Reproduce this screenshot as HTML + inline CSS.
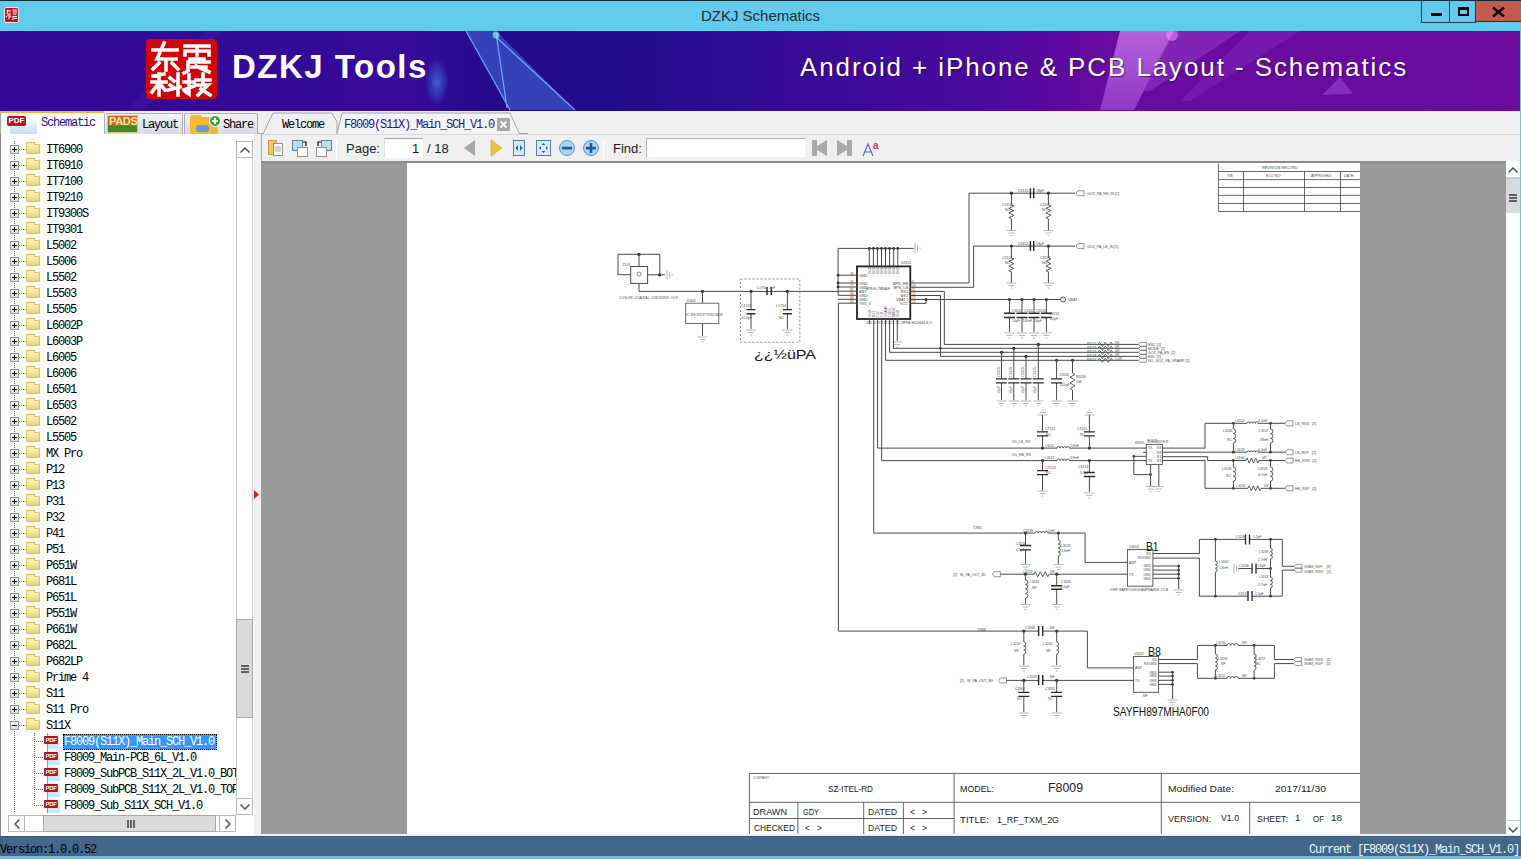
<!DOCTYPE html>
<html><head><meta charset="utf-8"><style>
*{margin:0;padding:0;box-sizing:border-box}
html,body{width:1521px;height:859px;overflow:hidden;background:#f0f0f0;font-family:"Liberation Sans",sans-serif;position:relative}
.a{position:absolute}
#title{left:0;top:0;width:1521px;height:31px;background:#62caec;border-top:1px solid #0c2c3c}
#title .t{left:0;width:1521px;top:6px;text-align:center;font-size:15px;color:#1e2c38}
.wb{top:0;height:22px;border:1px solid #1a3c50;border-top:none}
#banner{left:0;top:31px;width:1520px;height:80px;background:#300a94;overflow:hidden}
#tabs{left:0;top:111px;width:1520px;height:23px;background:#f0f0f0}
#left{left:0;top:134px;width:254px;height:703px;background:#fff;border-left:1px solid #888;overflow:hidden}
#split{left:254px;top:134px;width:8px;height:702px;background:#f0f0f0}
#tb{left:261px;top:134px;width:1259px;height:27px;background:#f0f0f0;border-top:1px solid #d8d8d8;border-left:1px solid #a8a8a8}
#view{left:261px;top:161px;width:1245px;height:673px;background:#9a9a9a}
#page{left:407px;top:163px;width:953px;height:671px;background:#fff;overflow:hidden}
#vsb{left:1506px;top:161px;width:14px;height:673px;background:#fff}
#status{left:0;top:836px;width:1521px;height:20px;background:#44668a;border-top:1px solid #3c5a70;border-bottom:1px solid #386888}
#bottom{left:0;top:856px;width:1521px;height:3px;background:#6ec2de}
#rb{left:1520px;top:31px;width:1px;height:825px;background:#64c8ea}
.mono{font-family:"Liberation Mono",monospace}
.tt{font-family:"Liberation Mono",monospace;font-size:12px;line-height:16px;letter-spacing:-1.2px;color:#000;white-space:nowrap}
.vdot{width:1px;background:repeating-linear-gradient(180deg,#707070 0 1px,transparent 1px 2px)}
.hdot{height:1px;background:repeating-linear-gradient(90deg,#707070 0 1px,transparent 1px 2px)}
.pbox{width:9px;height:9px;border:1px solid #9a9a9a;background:linear-gradient(180deg,#fff,#dcdcdc)}
.ph{left:1px;top:3px;width:5px;height:1px;background:#000}
.pv{left:3px;top:1px;width:1px;height:5px;background:#000}
.fd{width:14px;height:10px;background:linear-gradient(180deg,#fcf2b8,#ecd070);border:1px solid #dcc060;border-radius:1px}
.fd:before{content:"";position:absolute;left:-1px;top:-3px;width:7px;height:2px;background:#f8eaa8;border:1px solid #dcc060;border-bottom:none}
.pdoc{width:13px;height:16px;background:linear-gradient(180deg,#f0f8ff,#c8e4f4);border-left:1px solid #7aa0c0}
.pbad{width:14px;height:8px;background:#b8121a;color:#fff;font-size:6px;line-height:8px;font-weight:bold;text-align:center;border-radius:1px;letter-spacing:-0.3px}
.sel{background:#3399ff;outline:1px dotted #000;outline-offset:-1px}
.tab{top:113px;height:21px;border:1px solid #a8b0bc;border-bottom:none;background:linear-gradient(180deg,#f4f4f8,#d8dae6);border-radius:2px 2px 0 0}
.tl{font-family:"Liberation Mono",monospace;font-size:12px;letter-spacing:-1.2px;white-space:nowrap}
.ti{font-size:13px;color:#1c1c1c}
.sep{top:139px;width:1px;height:20px;background:#c8c8c8;border-right:1px solid #fff}
</style></head><body>
<div id="title" class="a"><div class="a t">DZKJ Schematics</div>
<div class="a" style="left:4px;top:6px;width:15px;height:16px;background:#c8141c;border-radius:2px;border:1px solid #e8e8e8"></div><svg class="a" style="left:5px;top:7px" width="13" height="14" stroke="#fff" stroke-width="1" fill="none"><path d="M1.5 3 H6 M3 1.5 L2 6 H6 M4 6 V11 M1 9 L2.5 7.5 M6 9 L5 7.5 M7.5 2 H12 M7.5 4 H12 M8 6 H11.5 M8 8 V12 M8 8.5 H12 M9 10.5 H12"/></svg>
<div class="a wb" style="left:1421px;width:29px"><div class="a" style="left:9px;top:12px;width:11px;height:3px;background:#000"></div></div>
<div class="a wb" style="left:1449px;width:27px;border-left:1px solid #1a3c50"><div class="a" style="left:8px;top:6px;width:11px;height:9px;border:2px solid #000;border-top-width:3px"></div></div>
<div class="a" style="left:1476px;top:0;width:45px;height:21px;background:#c75a4e;border-bottom:1px solid #40202a"><svg class="a" style="left:16px;top:6px" width="13" height="10"><path d="M1 0.5 L12 9.5 M12 0.5 L1 9.5" stroke="#000" stroke-width="2.6"/></svg></div>
</div>
<div id="banner" class="a">
<svg class="a" style="left:0;top:0" width="1520" height="80">
<defs>
<linearGradient id="bg" x1="0" y1="0" x2="1520" y2="0" gradientUnits="userSpaceOnUse">
<stop offset="0" stop-color="#300a94"/><stop offset="0.27" stop-color="#360a9a"/><stop offset="0.33" stop-color="#220a8a"/><stop offset="0.40" stop-color="#220c8a"/><stop offset="0.46" stop-color="#2c0c92"/><stop offset="0.54" stop-color="#380a98"/><stop offset="0.59" stop-color="#420a9c"/><stop offset="0.66" stop-color="#4e0aa0"/><stop offset="0.69" stop-color="#5a0aa0"/><stop offset="0.73" stop-color="#680aa0"/><stop offset="1" stop-color="#6a0a9e"/>
</linearGradient>
<radialGradient id="glow" cx="0.5" cy="0.5" r="0.5"><stop offset="0" stop-color="#40a0ff" stop-opacity="0.7"/><stop offset="1" stop-color="#40a0ff" stop-opacity="0"/></radialGradient>
<linearGradient id="pk" x1="0" y1="0" x2="0" y2="1"><stop offset="0" stop-color="#d080f0" stop-opacity="0.75"/><stop offset="1" stop-color="#b060e0" stop-opacity="0.55"/></linearGradient>
</defs>
<rect width="1520" height="80" fill="url(#bg)"/>
<polygon points="125,80 205,0 222,0 142,80" fill="#5a50d0" opacity="0.12"/>
<polygon points="466,0 496,0 575,79 510,79" fill="#3c58cc" opacity="0.7"/>
<path d="M466,0 L510,79 M496,2 L507,77 M496,6 L575,79" stroke="#70b0ff" stroke-width="1.3" fill="none" opacity="0.9"/>
<circle cx="496" cy="4" r="3.5" fill="#a0ffff" opacity="0.6"/>
<ellipse cx="437" cy="51" rx="12" ry="24" fill="url(#glow)" opacity="0.8"/>
<polygon points="1120,0 1174,0 1134,79 1100,79" fill="url(#pk)"/>
<polygon points="1174,0 1240,0 1150,60 1140,60" fill="#9a40d0" opacity="0.5"/>
<polygon points="1250,0 1300,0 1190,70 1180,70" fill="#9040d0" opacity="0.3"/>
<circle cx="1172" cy="4" r="6" fill="#ff90ff" opacity="0.5"/>
<polygon points="1322,64 1340,46 1353,63" fill="#a050e0" opacity="0.5"/>
</svg>
<div class="a" style="left:146px;top:8px;width:71px;height:60px;background:#d0060a;border-radius:4px"></div>
<svg class="a" style="left:146px;top:8px" width="71" height="60" fill="none" stroke="#fff" stroke-width="3.6" stroke-linecap="square">
<path d="M7 11 H31 M18 4 L11 20 H30 M20 20 V31 M13 24 L7 30 M26 24 L32 30"/>
<path d="M39 7 H63 M39 12 V16 M63 12 V16 M39 12 H63 M51 7 V16 M44 20 H58 M42 23 V32 L38 34 M42 23 H63 M46 28 H60 M50 27 L63 33"/>
<path d="M7 37 L18 35 M13 35 V56 M6 43 H20 M12 45 L6 53 M14 45 L19 51 M24 39 L28 42 M24 46 L28 49 M32 35 V56 M22 51 L34 48"/>
<path d="M38 43 H48 M43 36 V55 L40 53 M38 51 L48 47 M50 41 H64 M57 35 V46 M51 46 H62 L52 56 M55 50 L64 56"/>
</svg>
<div class="a" style="left:232px;top:17px;font-size:33px;font-weight:bold;color:#fff;letter-spacing:1.5px;white-space:nowrap">DZKJ Tools</div>
<div class="a" style="left:800px;top:21px;font-size:26px;color:#fff;letter-spacing:1.9px;white-space:nowrap;text-shadow:1px 1px 1px rgba(40,0,60,0.6)">Android + iPhone &amp; PCB Layout - Schematics</div>
</div>
<div id="rb" class="a"></div>
<div id="tabs" class="a">
<div class="a" style="left:0;top:0px;width:104px;height:23px;background:#fff;border-top:2px solid #f4b030;border-left:1px solid #9aa"></div>
<div class="a" style="left:10px;top:6px;width:27px;height:17px;background:linear-gradient(180deg,#f8fcff,#c8e0f0);clip-path:polygon(0 0,70% 0,100% 30%,100% 100%,0 100%)"></div>
<div class="a" style="left:7px;top:5px;width:19px;height:10px;background:#c01018;border-radius:2px;color:#fff;font-size:8px;font-weight:bold;line-height:10px;text-align:center">PDF</div>
<div class="a tl" style="left:41px;top:5px;color:#1818a0">Schematic</div>
<div class="a tab" style="left:104px;top:2px;width:79px"></div>
<div class="a" style="left:107px;top:4px;width:31px;height:18px;background:linear-gradient(180deg,#c8641c 0 60%,#3c8a30 60%);border:1px solid #e8c070"></div>
<div class="a" style="left:109px;top:4px;font-size:11px;font-weight:bold;color:#ffe8a0;letter-spacing:-0.3px">PADS</div>
<div class="a tl" style="left:142px;top:7px;color:#000">Layout</div>
<div class="a tab" style="left:184px;top:2px;width:74px"></div>
<div class="a" style="left:190px;top:6px;width:28px;height:17px;background:#f8b830;border-radius:2px"></div>
<div class="a" style="left:190px;top:4px;width:12px;height:4px;background:#f8b830;border-radius:2px 2px 0 0"></div>
<div class="a" style="left:196px;top:14px;width:13px;height:7px;background:#5aa0e0;border-radius:5px"></div>
<div class="a" style="left:209px;top:4px;width:12px;height:12px;background:#3aa83a;border-radius:50%;border:1px solid #fff"></div>
<div class="a" style="left:214px;top:7px;width:2px;height:6px;background:#fff"></div>
<div class="a" style="left:212px;top:9px;width:6px;height:2px;background:#fff"></div>
<div class="a tl" style="left:223px;top:7px;color:#000">Share</div>
<svg class="a" style="left:258px;top:0" width="270" height="23"><path d="M5 23 L15 2 H74 L79 11 L79 23" fill="#f0f0f2" stroke="#a0a6b0"/><path d="M79 23 L84 2 H252 L261 22" fill="#f4f4f6" stroke="#a0a6b0"/><path d="M0 22.5 H5 M261 22.5 H1270" stroke="#a0a6b0"/></svg>
<div class="a tl" style="left:282px;top:7px;color:#000">Welcome</div>
<div class="a tl" style="left:344px;top:7px;color:#1818a0">F8009(S11X)_Main_SCH_V1.0</div>
<div class="a" style="left:497px;top:7px;width:13px;height:13px;background:#a8a8a8"><svg class="a" style="left:3px;top:3px" width="7" height="7"><path d="M0.5 0.5 L6.5 6.5 M6.5 0.5 L0.5 6.5" stroke="#fff" stroke-width="1.8"/></svg></div>
</div>
<div id="left" class="a">
<div class="a" style="left:-1px;top:-134px;width:262px;height:860px">
<div class="a vdot" style="left:14px;top:141px;height:672px"></div>
<div class="a hdot" style="left:19px;top:149px;width:7px"></div>
<div class="a pbox" style="left:10px;top:145px"><div class="a ph"></div><div class="a pv"></div></div>
<div class="a fd" style="left:26px;top:144px"></div>
<div class="a tt" style="left:46px;top:142px">IT6900</div>
<div class="a hdot" style="left:19px;top:165px;width:7px"></div>
<div class="a pbox" style="left:10px;top:161px"><div class="a ph"></div><div class="a pv"></div></div>
<div class="a fd" style="left:26px;top:160px"></div>
<div class="a tt" style="left:46px;top:158px">IT6910</div>
<div class="a hdot" style="left:19px;top:181px;width:7px"></div>
<div class="a pbox" style="left:10px;top:177px"><div class="a ph"></div><div class="a pv"></div></div>
<div class="a fd" style="left:26px;top:176px"></div>
<div class="a tt" style="left:46px;top:174px">IT7100</div>
<div class="a hdot" style="left:19px;top:197px;width:7px"></div>
<div class="a pbox" style="left:10px;top:193px"><div class="a ph"></div><div class="a pv"></div></div>
<div class="a fd" style="left:26px;top:192px"></div>
<div class="a tt" style="left:46px;top:190px">IT9210</div>
<div class="a hdot" style="left:19px;top:213px;width:7px"></div>
<div class="a pbox" style="left:10px;top:209px"><div class="a ph"></div><div class="a pv"></div></div>
<div class="a fd" style="left:26px;top:208px"></div>
<div class="a tt" style="left:46px;top:206px">IT9300S</div>
<div class="a hdot" style="left:19px;top:229px;width:7px"></div>
<div class="a pbox" style="left:10px;top:225px"><div class="a ph"></div><div class="a pv"></div></div>
<div class="a fd" style="left:26px;top:224px"></div>
<div class="a tt" style="left:46px;top:222px">IT9301</div>
<div class="a hdot" style="left:19px;top:245px;width:7px"></div>
<div class="a pbox" style="left:10px;top:241px"><div class="a ph"></div><div class="a pv"></div></div>
<div class="a fd" style="left:26px;top:240px"></div>
<div class="a tt" style="left:46px;top:238px">L5002</div>
<div class="a hdot" style="left:19px;top:261px;width:7px"></div>
<div class="a pbox" style="left:10px;top:257px"><div class="a ph"></div><div class="a pv"></div></div>
<div class="a fd" style="left:26px;top:256px"></div>
<div class="a tt" style="left:46px;top:254px">L5006</div>
<div class="a hdot" style="left:19px;top:277px;width:7px"></div>
<div class="a pbox" style="left:10px;top:273px"><div class="a ph"></div><div class="a pv"></div></div>
<div class="a fd" style="left:26px;top:272px"></div>
<div class="a tt" style="left:46px;top:270px">L5502</div>
<div class="a hdot" style="left:19px;top:293px;width:7px"></div>
<div class="a pbox" style="left:10px;top:289px"><div class="a ph"></div><div class="a pv"></div></div>
<div class="a fd" style="left:26px;top:288px"></div>
<div class="a tt" style="left:46px;top:286px">L5503</div>
<div class="a hdot" style="left:19px;top:309px;width:7px"></div>
<div class="a pbox" style="left:10px;top:305px"><div class="a ph"></div><div class="a pv"></div></div>
<div class="a fd" style="left:26px;top:304px"></div>
<div class="a tt" style="left:46px;top:302px">L5505</div>
<div class="a hdot" style="left:19px;top:325px;width:7px"></div>
<div class="a pbox" style="left:10px;top:321px"><div class="a ph"></div><div class="a pv"></div></div>
<div class="a fd" style="left:26px;top:320px"></div>
<div class="a tt" style="left:46px;top:318px">L6002P</div>
<div class="a hdot" style="left:19px;top:341px;width:7px"></div>
<div class="a pbox" style="left:10px;top:337px"><div class="a ph"></div><div class="a pv"></div></div>
<div class="a fd" style="left:26px;top:336px"></div>
<div class="a tt" style="left:46px;top:334px">L6003P</div>
<div class="a hdot" style="left:19px;top:357px;width:7px"></div>
<div class="a pbox" style="left:10px;top:353px"><div class="a ph"></div><div class="a pv"></div></div>
<div class="a fd" style="left:26px;top:352px"></div>
<div class="a tt" style="left:46px;top:350px">L6005</div>
<div class="a hdot" style="left:19px;top:373px;width:7px"></div>
<div class="a pbox" style="left:10px;top:369px"><div class="a ph"></div><div class="a pv"></div></div>
<div class="a fd" style="left:26px;top:368px"></div>
<div class="a tt" style="left:46px;top:366px">L6006</div>
<div class="a hdot" style="left:19px;top:389px;width:7px"></div>
<div class="a pbox" style="left:10px;top:385px"><div class="a ph"></div><div class="a pv"></div></div>
<div class="a fd" style="left:26px;top:384px"></div>
<div class="a tt" style="left:46px;top:382px">L6501</div>
<div class="a hdot" style="left:19px;top:405px;width:7px"></div>
<div class="a pbox" style="left:10px;top:401px"><div class="a ph"></div><div class="a pv"></div></div>
<div class="a fd" style="left:26px;top:400px"></div>
<div class="a tt" style="left:46px;top:398px">L6503</div>
<div class="a hdot" style="left:19px;top:421px;width:7px"></div>
<div class="a pbox" style="left:10px;top:417px"><div class="a ph"></div><div class="a pv"></div></div>
<div class="a fd" style="left:26px;top:416px"></div>
<div class="a tt" style="left:46px;top:414px">L6502</div>
<div class="a hdot" style="left:19px;top:437px;width:7px"></div>
<div class="a pbox" style="left:10px;top:433px"><div class="a ph"></div><div class="a pv"></div></div>
<div class="a fd" style="left:26px;top:432px"></div>
<div class="a tt" style="left:46px;top:430px">L5505</div>
<div class="a hdot" style="left:19px;top:453px;width:7px"></div>
<div class="a pbox" style="left:10px;top:449px"><div class="a ph"></div><div class="a pv"></div></div>
<div class="a fd" style="left:26px;top:448px"></div>
<div class="a tt" style="left:46px;top:446px">MX Pro</div>
<div class="a hdot" style="left:19px;top:469px;width:7px"></div>
<div class="a pbox" style="left:10px;top:465px"><div class="a ph"></div><div class="a pv"></div></div>
<div class="a fd" style="left:26px;top:464px"></div>
<div class="a tt" style="left:46px;top:462px">P12</div>
<div class="a hdot" style="left:19px;top:485px;width:7px"></div>
<div class="a pbox" style="left:10px;top:481px"><div class="a ph"></div><div class="a pv"></div></div>
<div class="a fd" style="left:26px;top:480px"></div>
<div class="a tt" style="left:46px;top:478px">P13</div>
<div class="a hdot" style="left:19px;top:501px;width:7px"></div>
<div class="a pbox" style="left:10px;top:497px"><div class="a ph"></div><div class="a pv"></div></div>
<div class="a fd" style="left:26px;top:496px"></div>
<div class="a tt" style="left:46px;top:494px">P31</div>
<div class="a hdot" style="left:19px;top:517px;width:7px"></div>
<div class="a pbox" style="left:10px;top:513px"><div class="a ph"></div><div class="a pv"></div></div>
<div class="a fd" style="left:26px;top:512px"></div>
<div class="a tt" style="left:46px;top:510px">P32</div>
<div class="a hdot" style="left:19px;top:533px;width:7px"></div>
<div class="a pbox" style="left:10px;top:529px"><div class="a ph"></div><div class="a pv"></div></div>
<div class="a fd" style="left:26px;top:528px"></div>
<div class="a tt" style="left:46px;top:526px">P41</div>
<div class="a hdot" style="left:19px;top:549px;width:7px"></div>
<div class="a pbox" style="left:10px;top:545px"><div class="a ph"></div><div class="a pv"></div></div>
<div class="a fd" style="left:26px;top:544px"></div>
<div class="a tt" style="left:46px;top:542px">P51</div>
<div class="a hdot" style="left:19px;top:565px;width:7px"></div>
<div class="a pbox" style="left:10px;top:561px"><div class="a ph"></div><div class="a pv"></div></div>
<div class="a fd" style="left:26px;top:560px"></div>
<div class="a tt" style="left:46px;top:558px">P651W</div>
<div class="a hdot" style="left:19px;top:581px;width:7px"></div>
<div class="a pbox" style="left:10px;top:577px"><div class="a ph"></div><div class="a pv"></div></div>
<div class="a fd" style="left:26px;top:576px"></div>
<div class="a tt" style="left:46px;top:574px">P681L</div>
<div class="a hdot" style="left:19px;top:597px;width:7px"></div>
<div class="a pbox" style="left:10px;top:593px"><div class="a ph"></div><div class="a pv"></div></div>
<div class="a fd" style="left:26px;top:592px"></div>
<div class="a tt" style="left:46px;top:590px">P651L</div>
<div class="a hdot" style="left:19px;top:613px;width:7px"></div>
<div class="a pbox" style="left:10px;top:609px"><div class="a ph"></div><div class="a pv"></div></div>
<div class="a fd" style="left:26px;top:608px"></div>
<div class="a tt" style="left:46px;top:606px">P551W</div>
<div class="a hdot" style="left:19px;top:629px;width:7px"></div>
<div class="a pbox" style="left:10px;top:625px"><div class="a ph"></div><div class="a pv"></div></div>
<div class="a fd" style="left:26px;top:624px"></div>
<div class="a tt" style="left:46px;top:622px">P661W</div>
<div class="a hdot" style="left:19px;top:645px;width:7px"></div>
<div class="a pbox" style="left:10px;top:641px"><div class="a ph"></div><div class="a pv"></div></div>
<div class="a fd" style="left:26px;top:640px"></div>
<div class="a tt" style="left:46px;top:638px">P682L</div>
<div class="a hdot" style="left:19px;top:661px;width:7px"></div>
<div class="a pbox" style="left:10px;top:657px"><div class="a ph"></div><div class="a pv"></div></div>
<div class="a fd" style="left:26px;top:656px"></div>
<div class="a tt" style="left:46px;top:654px">P682LP</div>
<div class="a hdot" style="left:19px;top:677px;width:7px"></div>
<div class="a pbox" style="left:10px;top:673px"><div class="a ph"></div><div class="a pv"></div></div>
<div class="a fd" style="left:26px;top:672px"></div>
<div class="a tt" style="left:46px;top:670px">Prime 4</div>
<div class="a hdot" style="left:19px;top:693px;width:7px"></div>
<div class="a pbox" style="left:10px;top:689px"><div class="a ph"></div><div class="a pv"></div></div>
<div class="a fd" style="left:26px;top:688px"></div>
<div class="a tt" style="left:46px;top:686px">S11</div>
<div class="a hdot" style="left:19px;top:709px;width:7px"></div>
<div class="a pbox" style="left:10px;top:705px"><div class="a ph"></div><div class="a pv"></div></div>
<div class="a fd" style="left:26px;top:704px"></div>
<div class="a tt" style="left:46px;top:702px">S11 Pro</div>
<div class="a hdot" style="left:19px;top:725px;width:7px"></div>
<div class="a pbox" style="left:10px;top:721px"><div class="a ph"></div></div>
<div class="a fd" style="left:26px;top:720px"></div>
<div class="a tt" style="left:46px;top:718px">S11X</div>
<div class="a vdot" style="left:34px;top:733px;height:73px"></div>
<div class="a hdot" style="left:34px;top:741px;width:10px"></div>
<div class="a pdoc" style="left:47px;top:733px"></div><div class="a pbad" style="left:44px;top:736px">PDF</div>
<div class="a sel" style="left:63px;top:734px;width:154px;height:16px"></div>
<div class="a tt" style="left:64px;top:734px;color:#fff">F8009(S11X)_Main_SCH_V1.0</div>
<div class="a hdot" style="left:34px;top:757px;width:10px"></div>
<div class="a pdoc" style="left:47px;top:749px"></div><div class="a pbad" style="left:44px;top:752px">PDF</div>
<div class="a tt" style="left:64px;top:750px">F8009_Main-PCB_6L_V1.0</div>
<div class="a hdot" style="left:34px;top:773px;width:10px"></div>
<div class="a pdoc" style="left:47px;top:765px"></div><div class="a pbad" style="left:44px;top:768px">PDF</div>
<div class="a tt" style="left:64px;top:766px">F8009_SubPCB_S11X_2L_V1.0_BOT</div>
<div class="a hdot" style="left:34px;top:789px;width:10px"></div>
<div class="a pdoc" style="left:47px;top:781px"></div><div class="a pbad" style="left:44px;top:784px">PDF</div>
<div class="a tt" style="left:64px;top:782px">F8009_SubPCB_S11X_2L_V1.0_TOP</div>
<div class="a hdot" style="left:34px;top:805px;width:10px"></div>
<div class="a pdoc" style="left:47px;top:797px"></div><div class="a pbad" style="left:44px;top:800px">PDF</div>
<div class="a tt" style="left:64px;top:798px">F8009_Sub_S11X_SCH_V1.0</div>
<div class="a" style="left:236px;top:141px;width:17px;height:673px;background:#fff;border:1px solid #c8c8c8"></div>
<div class="a" style="left:236px;top:141px;width:17px;height:17px;border:1px solid #b8b8b8;background:#fff"><svg class="a" style="left:3px;top:5px" width="10" height="6"><path d="M0.5 5.5 L5 1 L9.5 5.5" fill="none" stroke="#505050" stroke-width="1.5"/></svg></div>
<div class="a" style="left:236px;top:619px;width:17px;height:99px;border:1px solid #a8a8a8;background:#dadada"><div class="a" style="left:4px;top:45px;width:8px;height:2px;background:#606060"></div><div class="a" style="left:4px;top:48px;width:8px;height:2px;background:#606060"></div><div class="a" style="left:4px;top:51px;width:8px;height:2px;background:#606060"></div></div>
<div class="a" style="left:236px;top:798px;width:17px;height:17px;border:1px solid #b8b8b8;background:#fff"><svg class="a" style="left:3px;top:5px" width="10" height="6"><path d="M0.5 0.5 L5 5 L9.5 0.5" fill="none" stroke="#505050" stroke-width="1.5"/></svg></div>
<div class="a" style="left:8px;top:815px;width:228px;height:17px;background:#fff;border:1px solid #b8b8b8"></div>
<div class="a" style="left:8px;top:815px;width:17px;height:17px;border:1px solid #b8b8b8;background:#fff"><svg class="a" style="left:5px;top:3px" width="6" height="10"><path d="M5.5 0.5 L1 5 L5.5 9.5" fill="none" stroke="#505050" stroke-width="1.5"/></svg></div>
<div class="a" style="left:43px;top:815px;width:173px;height:17px;border:1px solid #a8a8a8;background:#dadada"><div class="a" style="left:83px;top:4px;width:2px;height:8px;background:#606060"></div><div class="a" style="left:86px;top:4px;width:2px;height:8px;background:#606060"></div><div class="a" style="left:89px;top:4px;width:2px;height:8px;background:#606060"></div></div>
<div class="a" style="left:219px;top:815px;width:17px;height:17px;border:1px solid #b8b8b8;background:#fff"><svg class="a" style="left:5px;top:3px" width="6" height="10"><path d="M0.5 0.5 L5 5 L0.5 9.5" fill="none" stroke="#505050" stroke-width="1.5"/></svg></div>
</div></div>
<div id="split" class="a"><svg class="a" style="left:0;top:356px" width="5" height="9"><path d="M0 0 L5 4.5 L0 9Z" fill="#d02020"/></svg></div>
<div id="tb" class="a"></div>
<svg class="a" style="left:262px;top:134px" width="650" height="27">
<g transform="translate(6,6)">
<rect x="0.5" y="0.5" width="8" height="14" fill="#f0c860" stroke="#c8a040"/>
<rect x="5.5" y="3.5" width="9" height="12" fill="#fff" stroke="#909090"/>
<path d="M7 7 H13 M7 9 H13 M7 11 H13" stroke="#a0a0a0"/>
</g>
<g transform="translate(30,6)">
<rect x="0.5" y="0.5" width="10" height="10" fill="#c0dcf0" stroke="#6080a0"/>
<rect x="5.5" y="7.5" width="10" height="9" fill="#fff" stroke="#909090"/>
<path d="M11 2 H14 V6" fill="none" stroke="#000" stroke-width="1.2"/>
</g>
<g transform="translate(54,6)">
<rect x="5.5" y="0.5" width="10" height="10" fill="#c0dcf0" stroke="#6080a0"/>
<rect x="0.5" y="7.5" width="10" height="9" fill="#fff" stroke="#909090"/>
<path d="M5 2 H2 V6" fill="none" stroke="#000" stroke-width="1.2"/>
</g>
<path d="M202 6 L213 1 V16Z" transform="translate(0,5) scale(1,1)" fill="none"/>
<path d="M213 6 V22 L202 14Z" fill="#a8a8a8"/>
<path d="M229 6 V22 L240 14Z" fill="#e8c040" stroke="#c8a020" stroke-width="0.6"/>
<rect x="251.5" y="6.5" width="11" height="15" fill="#d8e8f8" stroke="#5080b0"/>
<path d="M256 11 L253.5 14 L256 17Z M258 11 L260.5 14 L258 17Z" fill="#2060a0"/>
<rect x="274.5" y="6.5" width="14" height="15" fill="#d8e8f8" stroke="#5080b0"/>
<path d="M281.5 9 L279.5 11 H283.5Z M281.5 19 L279.5 17 H283.5Z M277 14 L279 12 V16Z M286 14 L284 12 V16Z" fill="#2060a0"/>
<circle cx="305" cy="14" r="7.5" fill="#a8d4f4" stroke="#7090a8"/>
<rect x="300" y="12.8" width="10" height="2.6" fill="#1a5aa0"/>
<circle cx="329" cy="14" r="7.5" fill="#a8d4f4" stroke="#7090a8"/>
<rect x="324" y="12.8" width="10" height="2.6" fill="#1a5aa0"/><rect x="327.7" y="9" width="2.6" height="10" fill="#1a5aa0"/>
<path d="M550 6 H555 V12 L565 6 V22 L555 16 V22 H550Z" fill="#a8a8a8"/>
<path d="M590 6 H585 V12 L575 6 V22 L585 16 V22 H590Z" fill="#a8a8a8"/>
<path d="M601 22 L606 10 L611 22 M603 18 H609" fill="none" stroke="#6060d8" stroke-width="1.2"/>
<text x="611" y="15" font-size="10" font-family="Liberation Sans" fill="#d03080" font-weight="bold">a</text>
</svg>
<div class="a sep" style="left:336px"></div>
<div class="a sep" style="left:603px"></div>
<div class="a ti" style="left:346px;top:141px">Page:</div>
<div class="a" style="left:384px;top:138px;width:39px;height:20px;background:#fff;border-top:1px solid #a0a0a0;border-left:1px solid #e0e0e0"></div>
<div class="a ti" style="left:412px;top:141px">1</div>
<div class="a ti" style="left:427px;top:141px">/ 18</div>
<div class="a ti" style="left:613px;top:141px">Find:</div>
<div class="a" style="left:646px;top:138px;width:160px;height:20px;background:#fff;border:1px solid #b0b0b0;border-right-color:#f0f0f0;border-bottom-color:#f0f0f0"></div>

<div id="view" class="a"></div>
<div class="a" style="left:261px;top:161px;width:1245px;height:2px;background:#8c8c8c"></div>
<div id="page" class="a"><svg class="a" style="left:0;top:0" width="953" height="671"><g transform="translate(-407,-163)"><path d="M618,274.7 L618,254.3 L659.8,254.3 L659.8,274.8" stroke="#4a4a4a" stroke-width="1" fill="none"/>
<path d="M618,274.7 L630.7,274.7" stroke="#4a4a4a" stroke-width="1" fill="none"/>
<rect x="630.7" y="266.5" width="16.899999999999977" height="16.899999999999977" stroke="#4a4a4a" stroke-width="1" fill="none"/>
<path d="M639,254.3 L639,266.5" stroke="#4a4a4a" stroke-width="1" fill="none"/>
<circle cx="639" cy="254.3" r="1.6" fill="#333"/>
<path d="M647.6,274.8 L665,274.8" stroke="#4a4a4a" stroke-width="1" fill="none"/>
<circle cx="659.6" cy="274.8" r="1.6" fill="#333"/>
<path d="M667,269.8 V279.8 M669.5,271.8 V277.8 M672,273.8 V275.8" stroke="#999" stroke-width="0.7" fill="none"/>
<circle cx="639" cy="274" r="2" stroke="#555" stroke-width="0.7" fill="none"/>
<text x="622" y="266" font-size="4" fill="#4a4a4a" text-anchor="start" font-weight="normal" font-family="Liberation Sans" xml:space="preserve">J101</text>
<text x="619" y="299" font-size="3.6" fill="#4a4a4a" text-anchor="start" font-weight="normal" font-family="Liberation Sans" xml:space="preserve">CON-RF-COAXIAL-103235829 #O.K</text>
<path d="M639,283.4 L639,291.4 L838.4,291.4" stroke="#4a4a4a" stroke-width="1" fill="none"/>
<circle cx="702.5" cy="291.4" r="1.6" fill="#333"/>
<rect x="685.7" y="303.2" width="33.09999999999991" height="20.400000000000034" stroke="#4a4a4a" stroke-width="0.8" fill="none"/>
<text x="686" y="315.5" font-size="3.6" fill="#4a4a4a" text-anchor="start" font-weight="normal" font-family="Liberation Sans" xml:space="preserve">IC-RF-RX3TTP4CW08</text>
<text x="686" y="301.5" font-size="3.6" fill="#4a4a4a" text-anchor="start" font-weight="normal" font-family="Liberation Sans" xml:space="preserve">J1302</text>
<path d="M702.5,291.4 L702.5,303.2" stroke="#4a4a4a" stroke-width="1" fill="none"/>
<path d="M702.5,323.6 L702.5,336" stroke="#4a4a4a" stroke-width="1" fill="none"/>
<path d="M697.5,337 H707.5 M699.5,339.5 H705.5 M701.5,342 H703.5" stroke="#999" stroke-width="0.7" fill="none"/>
<rect x="740.5" y="279" width="59.299999999999955" height="63.19999999999999" stroke="#888" stroke-width="0.9" fill="none" stroke-dasharray="2,2"/>
<circle cx="751" cy="291.4" r="1.6" fill="#333"/>
<circle cx="787.4" cy="291.4" r="1.6" fill="#333"/>
<path d="M767,287 V295 M771.3,287 V295" stroke="#222" stroke-width="1.4"/>
<path d="M751,291.4 L751,309.6" stroke="#4a4a4a" stroke-width="1" fill="none"/>
<path d="M751,313.7 L751,329" stroke="#4a4a4a" stroke-width="1" fill="none"/>
<path d="M746.5,309.6 H755.5 M746.5,313.7 H755.5" stroke="#2a2a2a" stroke-width="1.35"/>
<path d="M746,330 H756 M748,332.5 H754 M750,335 H752" stroke="#999" stroke-width="0.7" fill="none"/>
<path d="M787.4,291.4 L787.4,309.6" stroke="#4a4a4a" stroke-width="1" fill="none"/>
<path d="M787.4,313.7 L787.4,329" stroke="#4a4a4a" stroke-width="1" fill="none"/>
<path d="M782.9,309.6 H791.9 M782.9,313.7 H791.9" stroke="#2a2a2a" stroke-width="1.35"/>
<path d="M782.4,330 H792.4 M784.4,332.5 H790.4 M786.4,335 H788.4" stroke="#999" stroke-width="0.7" fill="none"/>
<text x="741" y="307" font-size="3.6" fill="#4a4a4a" text-anchor="start" font-weight="normal" font-family="Liberation Sans" xml:space="preserve">C1703</text>
<text x="741" y="319" font-size="3.6" fill="#4a4a4a" text-anchor="start" font-weight="normal" font-family="Liberation Sans" xml:space="preserve">10.5pF</text>
<text x="776" y="307" font-size="3.6" fill="#4a4a4a" text-anchor="start" font-weight="normal" font-family="Liberation Sans" xml:space="preserve">L1704</text>
<text x="779" y="319" font-size="3.6" fill="#4a4a4a" text-anchor="start" font-weight="normal" font-family="Liberation Sans" xml:space="preserve">NC</text>
<text x="757" y="289" font-size="3.6" fill="#4a4a4a" text-anchor="start" font-weight="normal" font-family="Liberation Sans" xml:space="preserve">L1700  1pF</text>
<text x="754" y="358.5" font-size="13" fill="#111" text-anchor="start" font-weight="normal" font-family="Liberation Sans" xml:space="preserve" textLength="62" lengthAdjust="spacingAndGlyphs">¿¿½üPA</text>
<rect x="857" y="266.4" width="53.3" height="52.6" stroke="#222" stroke-width="1.8" fill="none"/>
<path d="M838.1,295.3 L838.1,248.4 L913.8,248.4" stroke="#4a4a4a" stroke-width="1" fill="none"/>
<path d="M915,243.4 V253.4 M917.5,245.4 V251.4 M920,247.4 V249.4" stroke="#999" stroke-width="0.7" fill="none"/>
<path d="M869.3,248.4 L869.3,266.4" stroke="#4a4a4a" stroke-width="1" fill="none"/>
<circle cx="869.3" cy="248.4" r="1.4" fill="#333"/>
<text x="0" y="0" transform="translate(870.5999999999999,274) rotate(-90)" font-size="3.2" fill="#4a4a4a" font-family="Liberation Sans">GND</text>
<path d="M873.4,248.4 L873.4,266.4" stroke="#4a4a4a" stroke-width="1" fill="none"/>
<circle cx="873.4" cy="248.4" r="1.4" fill="#333"/>
<text x="0" y="0" transform="translate(874.6999999999999,274) rotate(-90)" font-size="3.2" fill="#4a4a4a" font-family="Liberation Sans">GND</text>
<path d="M877.4,248.4 L877.4,266.4" stroke="#4a4a4a" stroke-width="1" fill="none"/>
<circle cx="877.4" cy="248.4" r="1.4" fill="#333"/>
<text x="0" y="0" transform="translate(878.6999999999999,274) rotate(-90)" font-size="3.2" fill="#4a4a4a" font-family="Liberation Sans">GND</text>
<path d="M881.5,248.4 L881.5,266.4" stroke="#4a4a4a" stroke-width="1" fill="none"/>
<circle cx="881.5" cy="248.4" r="1.4" fill="#333"/>
<text x="0" y="0" transform="translate(882.8,274) rotate(-90)" font-size="3.2" fill="#4a4a4a" font-family="Liberation Sans">GND</text>
<path d="M885.5,248.4 L885.5,266.4" stroke="#4a4a4a" stroke-width="1" fill="none"/>
<circle cx="885.5" cy="248.4" r="1.4" fill="#333"/>
<text x="0" y="0" transform="translate(886.8,274) rotate(-90)" font-size="3.2" fill="#4a4a4a" font-family="Liberation Sans">GND</text>
<path d="M889.6,248.4 L889.6,266.4" stroke="#4a4a4a" stroke-width="1" fill="none"/>
<circle cx="889.6" cy="248.4" r="1.4" fill="#333"/>
<text x="0" y="0" transform="translate(890.9,274) rotate(-90)" font-size="3.2" fill="#4a4a4a" font-family="Liberation Sans">GND</text>
<path d="M893.7,248.4 L893.7,266.4" stroke="#4a4a4a" stroke-width="1" fill="none"/>
<circle cx="893.7" cy="248.4" r="1.4" fill="#333"/>
<text x="0" y="0" transform="translate(895.0,274) rotate(-90)" font-size="3.2" fill="#4a4a4a" font-family="Liberation Sans">GND</text>
<path d="M897.8,248.4 L897.8,266.4" stroke="#4a4a4a" stroke-width="1" fill="none"/>
<circle cx="897.8" cy="248.4" r="1.4" fill="#333"/>
<text x="0" y="0" transform="translate(899.0999999999999,274) rotate(-90)" font-size="3.2" fill="#4a4a4a" font-family="Liberation Sans">GND</text>
<path d="M838.1,275.2 L857,275.2" stroke="#4a4a4a" stroke-width="1" fill="none"/>
<path d="M838.1,283 L857,283" stroke="#4a4a4a" stroke-width="1" fill="none"/>
<path d="M838.1,287 L857,287" stroke="#4a4a4a" stroke-width="1" fill="none"/>
<path d="M838.1,291.2 L857,291.2" stroke="#4a4a4a" stroke-width="1" fill="none"/>
<path d="M838.1,295.3 L857,295.3" stroke="#4a4a4a" stroke-width="1" fill="none"/>
<path d="M838.1,299.3 L857,299.3" stroke="#4a4a4a" stroke-width="1" fill="none"/>
<path d="M838.1,303.2 L857,303.2" stroke="#4a4a4a" stroke-width="1" fill="none"/>
<circle cx="838.1" cy="275.2" r="1.4" fill="#333"/>
<circle cx="838.1" cy="283" r="1.4" fill="#333"/>
<circle cx="838.1" cy="287" r="1.4" fill="#333"/>
<text x="850" y="274.7" font-size="3.2" fill="#4a4a4a" text-anchor="start" font-weight="normal" font-family="Liberation Sans" xml:space="preserve">28</text>
<text x="850" y="282.5" font-size="3.2" fill="#4a4a4a" text-anchor="start" font-weight="normal" font-family="Liberation Sans" xml:space="preserve">26</text>
<text x="850" y="286.5" font-size="3.2" fill="#4a4a4a" text-anchor="start" font-weight="normal" font-family="Liberation Sans" xml:space="preserve">27</text>
<text x="850" y="290.7" font-size="3.2" fill="#4a4a4a" text-anchor="start" font-weight="normal" font-family="Liberation Sans" xml:space="preserve">35</text>
<text x="850" y="294.8" font-size="3.2" fill="#4a4a4a" text-anchor="start" font-weight="normal" font-family="Liberation Sans" xml:space="preserve">34</text>
<text x="850" y="298.8" font-size="3.2" fill="#4a4a4a" text-anchor="start" font-weight="normal" font-family="Liberation Sans" xml:space="preserve">33</text>
<text x="850" y="302.7" font-size="3.2" fill="#4a4a4a" text-anchor="start" font-weight="normal" font-family="Liberation Sans" xml:space="preserve">32</text>
<text x="912" y="282.5" font-size="3.2" fill="#4a4a4a" text-anchor="start" font-weight="normal" font-family="Liberation Sans" xml:space="preserve">9</text>
<text x="912" y="286.5" font-size="3.2" fill="#4a4a4a" text-anchor="start" font-weight="normal" font-family="Liberation Sans" xml:space="preserve">10</text>
<text x="912" y="290.7" font-size="3.2" fill="#4a4a4a" text-anchor="start" font-weight="normal" font-family="Liberation Sans" xml:space="preserve">11</text>
<text x="912" y="294.8" font-size="3.2" fill="#4a4a4a" text-anchor="start" font-weight="normal" font-family="Liberation Sans" xml:space="preserve">12</text>
<text x="912" y="298.8" font-size="3.2" fill="#4a4a4a" text-anchor="start" font-weight="normal" font-family="Liberation Sans" xml:space="preserve">13</text>
<text x="912" y="302.7" font-size="3.2" fill="#4a4a4a" text-anchor="start" font-weight="normal" font-family="Liberation Sans" xml:space="preserve">14</text>
<text x="859" y="276.7" font-size="3.8" fill="#4a4a4a" text-anchor="start" font-weight="normal" font-family="Liberation Sans" xml:space="preserve">GND</text>
<text x="859" y="284.5" font-size="3.8" fill="#4a4a4a" text-anchor="start" font-weight="normal" font-family="Liberation Sans" xml:space="preserve">GND</text>
<text x="859" y="288.5" font-size="3.8" fill="#4a4a4a" text-anchor="start" font-weight="normal" font-family="Liberation Sans" xml:space="preserve">GND</text>
<text x="859" y="292.7" font-size="3.8" fill="#4a4a4a" text-anchor="start" font-weight="normal" font-family="Liberation Sans" xml:space="preserve">ANT</text>
<text x="859" y="296.8" font-size="3.8" fill="#4a4a4a" text-anchor="start" font-weight="normal" font-family="Liberation Sans" xml:space="preserve">GND</text>
<text x="859" y="300.8" font-size="3.8" fill="#4a4a4a" text-anchor="start" font-weight="normal" font-family="Liberation Sans" xml:space="preserve">GND</text>
<text x="859" y="304.7" font-size="3.8" fill="#4a4a4a" text-anchor="start" font-weight="normal" font-family="Liberation Sans" xml:space="preserve">TRX_4</text>
<text x="908" y="284.5" font-size="3.8" fill="#4a4a4a" text-anchor="end" font-weight="normal" font-family="Liberation Sans" xml:space="preserve">BPN_HB</text>
<text x="908" y="288.5" font-size="3.8" fill="#4a4a4a" text-anchor="end" font-weight="normal" font-family="Liberation Sans" xml:space="preserve">BPN_LB</text>
<text x="908" y="292.7" font-size="3.8" fill="#4a4a4a" text-anchor="end" font-weight="normal" font-family="Liberation Sans" xml:space="preserve">BS2</text>
<text x="908" y="296.8" font-size="3.8" fill="#4a4a4a" text-anchor="end" font-weight="normal" font-family="Liberation Sans" xml:space="preserve">BS1</text>
<text x="908" y="300.8" font-size="3.8" fill="#4a4a4a" text-anchor="end" font-weight="normal" font-family="Liberation Sans" xml:space="preserve">VBATT</text>
<text x="908" y="304.7" font-size="3.8" fill="#4a4a4a" text-anchor="end" font-weight="normal" font-family="Liberation Sans" xml:space="preserve">VCC</text>
<text x="866" y="290" font-size="3.2" fill="#4a4a4a" text-anchor="start" font-weight="normal" font-family="Liberation Sans" xml:space="preserve">APBG4-7MNA0F</text>
<text x="901" y="264" font-size="3.6" fill="#4a4a4a" text-anchor="start" font-weight="normal" font-family="Liberation Sans" xml:space="preserve">U3101</text>
<text x="897" y="324" font-size="3.4" fill="#4a4a4a" text-anchor="start" font-weight="normal" font-family="Liberation Sans" xml:space="preserve">IC-RFPA-H026664-E.O</text>
<path d="M910.3,283 L969,283 L969,193.2 L1075,193.2" stroke="#4a4a4a" stroke-width="1" fill="none"/>
<path d="M910.3,287.3 L973.6,287.3 L973.6,246.1 L1075,246.1" stroke="#4a4a4a" stroke-width="1" fill="none"/>
<path d="M910.3,291.4 L944.3,291.4 L944.3,344.4 L1138.4,344.4" stroke="#4a4a4a" stroke-width="1" fill="none"/>
<path d="M910.3,295.5 L940.5,295.5 L940.5,356.4 L1138.4,356.4" stroke="#4a4a4a" stroke-width="1" fill="none"/>
<path d="M910.3,299.5 L1060.5,299.5" stroke="#4a4a4a" stroke-width="1" fill="none"/>
<path d="M910.3,303.4 L926,303.4 L926,299.5" stroke="#4a4a4a" stroke-width="1" fill="none"/>
<circle cx="926" cy="299.5" r="1.6" fill="#333"/>
<circle cx="1063" cy="299.5" r="2.5" stroke="#444" stroke-width="0.9" fill="#fff"/>
<text x="1068" y="301" font-size="3.8" fill="#4a4a4a" text-anchor="start" font-weight="normal" font-family="Liberation Sans" xml:space="preserve">VBAT</text>
<circle cx="1011.4" cy="193.2" r="1.6" fill="#333"/>
<circle cx="1048.4" cy="193.2" r="1.6" fill="#333"/>
<path d="M1011.4,193.2 L1011.4,204.8" stroke="#4a4a4a" stroke-width="1" fill="none"/>
<path d="M1011.4,218.8 L1011.4,230.5" stroke="#4a4a4a" stroke-width="1" fill="none"/>
<path d="M1011.4,204.8 L1013.9,205.96666666666667 L1008.9,208.3 L1013.9,210.63333333333335 L1008.9,212.96666666666667 L1013.9,215.3 L1008.9,217.63333333333335 L1011.4,218.8" stroke="#4a4a4a" stroke-width="0.9" fill="none"/>
<path d="M1006.4,230.5 H1016.4 M1008.4,233.0 H1014.4 M1010.4,235.5 H1012.4" stroke="#999" stroke-width="0.7" fill="none"/>
<path d="M1048.4,193.2 L1048.4,204.8" stroke="#4a4a4a" stroke-width="1" fill="none"/>
<path d="M1048.4,218.8 L1048.4,230.5" stroke="#4a4a4a" stroke-width="1" fill="none"/>
<path d="M1048.4,204.8 L1050.9,205.96666666666667 L1045.9,208.3 L1050.9,210.63333333333335 L1045.9,212.96666666666667 L1050.9,215.3 L1045.9,217.63333333333335 L1048.4,218.8" stroke="#4a4a4a" stroke-width="0.9" fill="none"/>
<path d="M1043.4,230.5 H1053.4 M1045.4,233.0 H1051.4 M1047.4,235.5 H1049.4" stroke="#999" stroke-width="0.7" fill="none"/>
<path d="M1030.4,188.2 V198.2 M1033.7,188.2 V198.2" stroke="#222" stroke-width="1.4"/>
<path d="M1076,193.2 L1078,190.7 H1084 V195.7 H1078Z" stroke="#777" stroke-width="0.8" fill="none"/>
<text x="1002" y="206.2" font-size="3.6" fill="#4a4a4a" text-anchor="start" font-weight="normal" font-family="Liberation Sans" xml:space="preserve">C3106</text>
<text x="1005" y="211.2" font-size="3.6" fill="#4a4a4a" text-anchor="start" font-weight="normal" font-family="Liberation Sans" xml:space="preserve">NC</text>
<text x="1040" y="206.2" font-size="3.6" fill="#4a4a4a" text-anchor="start" font-weight="normal" font-family="Liberation Sans" xml:space="preserve">C3117</text>
<text x="1042" y="211.2" font-size="3.6" fill="#4a4a4a" text-anchor="start" font-weight="normal" font-family="Liberation Sans" xml:space="preserve">NC</text>
<text x="1018" y="191.7" font-size="3.6" fill="#4a4a4a" text-anchor="start" font-weight="normal" font-family="Liberation Sans" xml:space="preserve">C3113</text>
<text x="1036" y="191.7" font-size="3.6" fill="#4a4a4a" text-anchor="start" font-weight="normal" font-family="Liberation Sans" xml:space="preserve">18pF</text>
<circle cx="1011.4" cy="246.1" r="1.6" fill="#333"/>
<circle cx="1048.4" cy="246.1" r="1.6" fill="#333"/>
<path d="M1011.4,246.1 L1011.4,257.9" stroke="#4a4a4a" stroke-width="1" fill="none"/>
<path d="M1011.4,271.8 L1011.4,283" stroke="#4a4a4a" stroke-width="1" fill="none"/>
<path d="M1011.4,257.9 L1013.9,259.05833333333334 L1008.9,261.375 L1013.9,263.69166666666666 L1008.9,266.0083333333333 L1013.9,268.325 L1008.9,270.64166666666665 L1011.4,271.8" stroke="#4a4a4a" stroke-width="0.9" fill="none"/>
<path d="M1006.4,283 H1016.4 M1008.4,285.5 H1014.4 M1010.4,288 H1012.4" stroke="#999" stroke-width="0.7" fill="none"/>
<path d="M1048.4,246.1 L1048.4,257.9" stroke="#4a4a4a" stroke-width="1" fill="none"/>
<path d="M1048.4,271.8 L1048.4,283" stroke="#4a4a4a" stroke-width="1" fill="none"/>
<path d="M1048.4,257.9 L1050.9,259.05833333333334 L1045.9,261.375 L1050.9,263.69166666666666 L1045.9,266.0083333333333 L1050.9,268.325 L1045.9,270.64166666666665 L1048.4,271.8" stroke="#4a4a4a" stroke-width="0.9" fill="none"/>
<path d="M1043.4,283 H1053.4 M1045.4,285.5 H1051.4 M1047.4,288 H1049.4" stroke="#999" stroke-width="0.7" fill="none"/>
<path d="M1030.4,241.1 V251.1 M1033.7,241.1 V251.1" stroke="#222" stroke-width="1.4"/>
<path d="M1076,246.1 L1078,243.6 H1084 V248.6 H1078Z" stroke="#777" stroke-width="0.8" fill="none"/>
<text x="1002" y="259.1" font-size="3.6" fill="#4a4a4a" text-anchor="start" font-weight="normal" font-family="Liberation Sans" xml:space="preserve">C3106</text>
<text x="1005" y="264.1" font-size="3.6" fill="#4a4a4a" text-anchor="start" font-weight="normal" font-family="Liberation Sans" xml:space="preserve">NC</text>
<text x="1040" y="259.1" font-size="3.6" fill="#4a4a4a" text-anchor="start" font-weight="normal" font-family="Liberation Sans" xml:space="preserve">C3117</text>
<text x="1042" y="264.1" font-size="3.6" fill="#4a4a4a" text-anchor="start" font-weight="normal" font-family="Liberation Sans" xml:space="preserve">NC</text>
<text x="1018" y="244.6" font-size="3.6" fill="#4a4a4a" text-anchor="start" font-weight="normal" font-family="Liberation Sans" xml:space="preserve">C3113</text>
<text x="1036" y="244.6" font-size="3.6" fill="#4a4a4a" text-anchor="start" font-weight="normal" font-family="Liberation Sans" xml:space="preserve">18pF</text>
<text x="1087" y="195" font-size="3.6" fill="#4a4a4a" text-anchor="start" font-weight="normal" font-family="Liberation Sans" xml:space="preserve">GOZ_PA_HB_IN [2]</text>
<text x="1087" y="248" font-size="3.6" fill="#4a4a4a" text-anchor="start" font-weight="normal" font-family="Liberation Sans" xml:space="preserve">GOZ_PA_LB_IN [2]</text>
<circle cx="1009.5" cy="299.5" r="1.6" fill="#333"/>
<path d="M1009.5,299.5 L1009.5,313.2" stroke="#4a4a4a" stroke-width="1" fill="none"/>
<path d="M1009.5,317.5 L1009.5,332" stroke="#4a4a4a" stroke-width="1" fill="none"/>
<path d="M1004.0,313.2 H1015.0 M1004.0,317.5 H1015.0" stroke="#2a2a2a" stroke-width="1.35"/>
<path d="M1004.5,333 H1014.5 M1006.5,335.5 H1012.5 M1008.5,338 H1010.5" stroke="#999" stroke-width="0.7" fill="none"/>
<circle cx="1022" cy="299.5" r="1.6" fill="#333"/>
<path d="M1022,299.5 L1022,313.2" stroke="#4a4a4a" stroke-width="1" fill="none"/>
<path d="M1022,317.5 L1022,332" stroke="#4a4a4a" stroke-width="1" fill="none"/>
<path d="M1016.5,313.2 H1027.5 M1016.5,317.5 H1027.5" stroke="#2a2a2a" stroke-width="1.35"/>
<path d="M1017,333 H1027 M1019,335.5 H1025 M1021,338 H1023" stroke="#999" stroke-width="0.7" fill="none"/>
<circle cx="1034" cy="299.5" r="1.6" fill="#333"/>
<path d="M1034,299.5 L1034,313.2" stroke="#4a4a4a" stroke-width="1" fill="none"/>
<path d="M1034,317.5 L1034,332" stroke="#4a4a4a" stroke-width="1" fill="none"/>
<path d="M1028.5,313.2 H1039.5 M1028.5,317.5 H1039.5" stroke="#2a2a2a" stroke-width="1.35"/>
<path d="M1029,333 H1039 M1031,335.5 H1037 M1033,338 H1035" stroke="#999" stroke-width="0.7" fill="none"/>
<circle cx="1046.4" cy="299.5" r="1.6" fill="#333"/>
<path d="M1046.4,299.5 L1046.4,313.2" stroke="#4a4a4a" stroke-width="1" fill="none"/>
<path d="M1046.4,317.5 L1046.4,332" stroke="#4a4a4a" stroke-width="1" fill="none"/>
<path d="M1040.9,313.2 H1051.9 M1040.9,317.5 H1051.9" stroke="#2a2a2a" stroke-width="1.35"/>
<path d="M1041.4,333 H1051.4 M1043.4,335.5 H1049.4 M1045.4,338 H1047.4" stroke="#999" stroke-width="0.7" fill="none"/>
<text x="1049" y="315" font-size="3.6" fill="#4a4a4a" text-anchor="start" font-weight="normal" font-family="Liberation Sans" xml:space="preserve">C3113</text>
<text x="1050" y="320" font-size="3.6" fill="#4a4a4a" text-anchor="start" font-weight="normal" font-family="Liberation Sans" xml:space="preserve">22pF</text>
<text x="1012" y="312" font-size="3.4" fill="#4a4a4a" text-anchor="start" font-weight="normal" font-family="Liberation Sans" xml:space="preserve">C3101  C3102  C3103</text>
<text x="1012" y="322" font-size="3.4" fill="#4a4a4a" text-anchor="start" font-weight="normal" font-family="Liberation Sans" xml:space="preserve">10pF   100nF  10pF</text>
<path d="M869.4,319 L869.4,324" stroke="#4a4a4a" stroke-width="1" fill="none"/>
<text x="0" y="0" transform="translate(870.6999999999999,317) rotate(-90)" font-size="3.2" fill="#4a4a4a" font-family="Liberation Sans">GND</text>
<path d="M873.7,319 L873.7,324" stroke="#4a4a4a" stroke-width="1" fill="none"/>
<text x="0" y="0" transform="translate(875.0,317) rotate(-90)" font-size="3.2" fill="#4a4a4a" font-family="Liberation Sans">RX1</text>
<path d="M877.6,319 L877.6,324" stroke="#4a4a4a" stroke-width="1" fill="none"/>
<text x="0" y="0" transform="translate(878.9,317) rotate(-90)" font-size="3.2" fill="#4a4a4a" font-family="Liberation Sans">TX2</text>
<path d="M881.7,319 L881.7,324" stroke="#4a4a4a" stroke-width="1" fill="none"/>
<text x="0" y="0" transform="translate(883.0,317) rotate(-90)" font-size="3.2" fill="#4a4a4a" font-family="Liberation Sans">TX1</text>
<path d="M885.6,319 L885.6,324" stroke="#4a4a4a" stroke-width="1" fill="none"/>
<text x="0" y="0" transform="translate(886.9,317) rotate(-90)" font-size="3.2" fill="#4a4a4a" font-family="Liberation Sans">VRAMP</text>
<path d="M889.6,319 L889.6,324" stroke="#4a4a4a" stroke-width="1" fill="none"/>
<text x="0" y="0" transform="translate(890.9,317) rotate(-90)" font-size="3.2" fill="#4a4a4a" font-family="Liberation Sans">TXEN</text>
<path d="M893.5,319 L893.5,324" stroke="#4a4a4a" stroke-width="1" fill="none"/>
<text x="0" y="0" transform="translate(894.8,317) rotate(-90)" font-size="3.2" fill="#4a4a4a" font-family="Liberation Sans">MODE</text>
<path d="M897.3,319 L897.3,324" stroke="#4a4a4a" stroke-width="1" fill="none"/>
<text x="0" y="0" transform="translate(898.5999999999999,317) rotate(-90)" font-size="3.2" fill="#4a4a4a" font-family="Liberation Sans">GND</text>
<text x="866" y="323.5" font-size="2.6" fill="#4a4a4a" text-anchor="start" font-weight="normal" font-family="Liberation Sans" xml:space="preserve">32 31 30 29 28 27 26 25</text>
<path d="M897.3,319 L897.3,341" stroke="#4a4a4a" stroke-width="1" fill="none"/>
<path d="M892.3,342 H902.3 M894.3,344.5 H900.3 M896.3,347 H898.3" stroke="#999" stroke-width="0.7" fill="none"/>
<path d="M893.5,319 L893.5,348.3 L1138.4,348.3" stroke="#4a4a4a" stroke-width="1" fill="none"/>
<path d="M889.6,319 L889.6,352.3 L1138.4,352.3" stroke="#4a4a4a" stroke-width="1" fill="none"/>
<path d="M885.6,319 L885.6,360.3 L1138.4,360.3" stroke="#4a4a4a" stroke-width="1" fill="none"/>
<circle cx="940.5" cy="348.3" r="1.2" fill="#333"/>
<path d="M1098,344.4 l1.5,-2.2 l2.9,4.4 l2.9,-4.4 l2.9,4.4 l2.9,-4.4 l1.5,2.2" stroke="#444" stroke-width="0.8" fill="none"/>
<path d="M1138.4,344.4 L1140.4,342.5 H1146.4 V346.29999999999995 H1140.4Z" stroke="#777" stroke-width="0.8" fill="none"/>
<path d="M1098,348.3 l1.5,-2.2 l2.9,4.4 l2.9,-4.4 l2.9,4.4 l2.9,-4.4 l1.5,2.2" stroke="#444" stroke-width="0.8" fill="none"/>
<path d="M1138.4,348.3 L1140.4,346.40000000000003 H1146.4 V350.2 H1140.4Z" stroke="#777" stroke-width="0.8" fill="none"/>
<path d="M1098,352.3 l1.5,-2.2 l2.9,4.4 l2.9,-4.4 l2.9,4.4 l2.9,-4.4 l1.5,2.2" stroke="#444" stroke-width="0.8" fill="none"/>
<path d="M1138.4,352.3 L1140.4,350.40000000000003 H1146.4 V354.2 H1140.4Z" stroke="#777" stroke-width="0.8" fill="none"/>
<path d="M1098,356.4 l1.5,-2.2 l2.9,4.4 l2.9,-4.4 l2.9,4.4 l2.9,-4.4 l1.5,2.2" stroke="#444" stroke-width="0.8" fill="none"/>
<path d="M1138.4,356.4 L1140.4,354.5 H1146.4 V358.29999999999995 H1140.4Z" stroke="#777" stroke-width="0.8" fill="none"/>
<path d="M1098,360.3 l1.5,-2.2 l2.9,4.4 l2.9,-4.4 l2.9,4.4 l2.9,-4.4 l1.5,2.2" stroke="#444" stroke-width="0.8" fill="none"/>
<path d="M1138.4,360.3 L1140.4,358.40000000000003 H1146.4 V362.2 H1140.4Z" stroke="#777" stroke-width="0.8" fill="none"/>
<text x="1087" y="345.4" font-size="3.2" fill="#4a4a4a" text-anchor="start" font-weight="normal" font-family="Liberation Sans" xml:space="preserve">R3125</text>
<text x="1087" y="349.3" font-size="3.2" fill="#4a4a4a" text-anchor="start" font-weight="normal" font-family="Liberation Sans" xml:space="preserve">R3126</text>
<text x="1087" y="353.3" font-size="3.2" fill="#4a4a4a" text-anchor="start" font-weight="normal" font-family="Liberation Sans" xml:space="preserve">R3124</text>
<text x="1087" y="357.4" font-size="3.2" fill="#4a4a4a" text-anchor="start" font-weight="normal" font-family="Liberation Sans" xml:space="preserve">R3128</text>
<text x="1087" y="361.3" font-size="3.2" fill="#4a4a4a" text-anchor="start" font-weight="normal" font-family="Liberation Sans" xml:space="preserve">R3127</text>
<text x="1148" y="345.9" font-size="3.6" fill="#4a4a4a" text-anchor="start" font-weight="normal" font-family="Liberation Sans" xml:space="preserve">BS2  [2]</text>
<text x="1148" y="349.8" font-size="3.6" fill="#4a4a4a" text-anchor="start" font-weight="normal" font-family="Liberation Sans" xml:space="preserve">MODE  [2]</text>
<text x="1148" y="353.8" font-size="3.6" fill="#4a4a4a" text-anchor="start" font-weight="normal" font-family="Liberation Sans" xml:space="preserve">GOZ_PA_EN  [2]</text>
<text x="1148" y="357.9" font-size="3.6" fill="#4a4a4a" text-anchor="start" font-weight="normal" font-family="Liberation Sans" xml:space="preserve">BS1  [2]</text>
<text x="1148" y="361.8" font-size="3.6" fill="#4a4a4a" text-anchor="start" font-weight="normal" font-family="Liberation Sans" xml:space="preserve">NO_GOZ_PA_VRAMP [2]</text>
<text x="1115" y="343.9" font-size="3.4" fill="#4a4a4a" text-anchor="start" font-weight="normal" font-family="Liberation Sans" xml:space="preserve">0R</text>
<text x="1115" y="347.8" font-size="3.4" fill="#4a4a4a" text-anchor="start" font-weight="normal" font-family="Liberation Sans" xml:space="preserve">0R</text>
<text x="1115" y="351.8" font-size="3.4" fill="#4a4a4a" text-anchor="start" font-weight="normal" font-family="Liberation Sans" xml:space="preserve">0R</text>
<text x="1115" y="355.9" font-size="3.4" fill="#4a4a4a" text-anchor="start" font-weight="normal" font-family="Liberation Sans" xml:space="preserve">0R</text>
<text x="1115" y="359.8" font-size="3.4" fill="#4a4a4a" text-anchor="start" font-weight="normal" font-family="Liberation Sans" xml:space="preserve">1.0K</text>
<circle cx="1001.5" cy="352.3" r="1.6" fill="#333"/>
<path d="M1001.5,352.3 L1001.5,378.8" stroke="#4a4a4a" stroke-width="1" fill="none"/>
<path d="M1001.5,382.9 L1001.5,400" stroke="#4a4a4a" stroke-width="1" fill="none"/>
<path d="M996.0,378.8 H1007.0 M996.0,382.9 H1007.0" stroke="#2a2a2a" stroke-width="1.35"/>
<path d="M996.5,401 H1006.5 M998.5,403.5 H1004.5 M1000.5,406 H1002.5" stroke="#999" stroke-width="0.7" fill="none"/>
<text x="0" y="0" transform="translate(999.5,377) rotate(-90)" font-size="3.6" fill="#4a4a4a" font-family="Liberation Sans">C3105</text>
<text x="0" y="0" transform="translate(999.5,394) rotate(-90)" font-size="3.6" fill="#4a4a4a" font-family="Liberation Sans">15pF</text>
<circle cx="1013.8" cy="348.3" r="1.6" fill="#333"/>
<path d="M1013.8,348.3 L1013.8,378.8" stroke="#4a4a4a" stroke-width="1" fill="none"/>
<path d="M1013.8,382.9 L1013.8,400" stroke="#4a4a4a" stroke-width="1" fill="none"/>
<path d="M1008.3,378.8 H1019.3 M1008.3,382.9 H1019.3" stroke="#2a2a2a" stroke-width="1.35"/>
<path d="M1008.8,401 H1018.8 M1010.8,403.5 H1016.8 M1012.8,406 H1014.8" stroke="#999" stroke-width="0.7" fill="none"/>
<text x="0" y="0" transform="translate(1011.8,377) rotate(-90)" font-size="3.6" fill="#4a4a4a" font-family="Liberation Sans">C3105</text>
<text x="0" y="0" transform="translate(1011.8,394) rotate(-90)" font-size="3.6" fill="#4a4a4a" font-family="Liberation Sans">15pF</text>
<circle cx="1026" cy="356.4" r="1.6" fill="#333"/>
<path d="M1026,356.4 L1026,378.8" stroke="#4a4a4a" stroke-width="1" fill="none"/>
<path d="M1026,382.9 L1026,400" stroke="#4a4a4a" stroke-width="1" fill="none"/>
<path d="M1020.5,378.8 H1031.5 M1020.5,382.9 H1031.5" stroke="#2a2a2a" stroke-width="1.35"/>
<path d="M1021,401 H1031 M1023,403.5 H1029 M1025,406 H1027" stroke="#999" stroke-width="0.7" fill="none"/>
<text x="0" y="0" transform="translate(1024,377) rotate(-90)" font-size="3.6" fill="#4a4a4a" font-family="Liberation Sans">C3105</text>
<text x="0" y="0" transform="translate(1024,394) rotate(-90)" font-size="3.6" fill="#4a4a4a" font-family="Liberation Sans">15pF</text>
<circle cx="1038.3" cy="344.4" r="1.6" fill="#333"/>
<path d="M1038.3,344.4 L1038.3,378.8" stroke="#4a4a4a" stroke-width="1" fill="none"/>
<path d="M1038.3,382.9 L1038.3,400" stroke="#4a4a4a" stroke-width="1" fill="none"/>
<path d="M1032.8,378.8 H1043.8 M1032.8,382.9 H1043.8" stroke="#2a2a2a" stroke-width="1.35"/>
<path d="M1033.3,401 H1043.3 M1035.3,403.5 H1041.3 M1037.3,406 H1039.3" stroke="#999" stroke-width="0.7" fill="none"/>
<text x="0" y="0" transform="translate(1036.3,377) rotate(-90)" font-size="3.6" fill="#4a4a4a" font-family="Liberation Sans">C3105</text>
<text x="0" y="0" transform="translate(1036.3,394) rotate(-90)" font-size="3.6" fill="#4a4a4a" font-family="Liberation Sans">15pF</text>
<circle cx="1056.6" cy="360.3" r="1.6" fill="#333"/>
<path d="M1056.6,360.3 L1056.6,378.8" stroke="#4a4a4a" stroke-width="1" fill="none"/>
<path d="M1056.6,382.9 L1056.6,400" stroke="#4a4a4a" stroke-width="1" fill="none"/>
<path d="M1051.1,378.8 H1062.1 M1051.1,382.9 H1062.1" stroke="#2a2a2a" stroke-width="1.35"/>
<path d="M1051.6,401 H1061.6 M1053.6,403.5 H1059.6 M1055.6,406 H1057.6" stroke="#999" stroke-width="0.7" fill="none"/>
<circle cx="1072.5" cy="360.3" r="1.6" fill="#333"/>
<path d="M1072.5,360.3 L1072.5,373" stroke="#4a4a4a" stroke-width="1" fill="none"/>
<path d="M1072.5,390 L1072.5,400" stroke="#4a4a4a" stroke-width="1" fill="none"/>
<path d="M1072.5,373 L1075.0,374.4166666666667 L1070.0,377.25 L1075.0,380.0833333333333 L1070.0,382.9166666666667 L1075.0,385.75 L1070.0,388.5833333333333 L1072.5,390" stroke="#4a4a4a" stroke-width="0.9" fill="none"/>
<path d="M1067.5,401 H1077.5 M1069.5,403.5 H1075.5 M1071.5,406 H1073.5" stroke="#999" stroke-width="0.7" fill="none"/>
<text x="1059" y="376" font-size="3.4" fill="#4a4a4a" text-anchor="start" font-weight="normal" font-family="Liberation Sans" xml:space="preserve">C3120</text>
<text x="1060" y="386" font-size="3.4" fill="#4a4a4a" text-anchor="start" font-weight="normal" font-family="Liberation Sans" xml:space="preserve">220pF</text>
<text x="1076" y="378" font-size="3.4" fill="#4a4a4a" text-anchor="start" font-weight="normal" font-family="Liberation Sans" xml:space="preserve">R3118</text>
<text x="1076" y="383" font-size="3.4" fill="#4a4a4a" text-anchor="start" font-weight="normal" font-family="Liberation Sans" xml:space="preserve">24K</text>
<path d="M838.4,303.2 L838.4,631.1 L1023.8,631.1" stroke="#4a4a4a" stroke-width="1" fill="none"/>
<path d="M873.7,324 L873.7,533.1 L1025.5,533.1" stroke="#4a4a4a" stroke-width="1" fill="none"/>
<path d="M877.6,324 L877.6,448.1 L1055,448.1" stroke="#4a4a4a" stroke-width="1" fill="none"/>
<path d="M1072,448.1 L1146.3,448.1" stroke="#4a4a4a" stroke-width="1" fill="none"/>
<path d="M881.7,324 L881.7,460.6 L1055,460.6" stroke="#4a4a4a" stroke-width="1" fill="none"/>
<path d="M1072,460.6 L1146.3,460.6" stroke="#4a4a4a" stroke-width="1" fill="none"/>
<text x="1012" y="443" font-size="3.6" fill="#4a4a4a" text-anchor="start" font-weight="normal" font-family="Liberation Sans" xml:space="preserve">2G_LB_RX</text>
<text x="1012" y="456" font-size="3.6" fill="#4a4a4a" text-anchor="start" font-weight="normal" font-family="Liberation Sans" xml:space="preserve">2G_HB_RX</text>
<circle cx="1042.5" cy="448.1" r="1.6" fill="#333"/>
<circle cx="1042.5" cy="460.6" r="1.6" fill="#333"/>
<circle cx="1089.4" cy="448.1" r="1.6" fill="#333"/>
<circle cx="1089.4" cy="460.6" r="1.6" fill="#333"/>
<path d="M1037.5,415 H1047.5 M1039.5,412.5 H1045.5 M1041.5,410 H1043.5" stroke="#999" stroke-width="0.7" fill="none"/>
<path d="M1042.5,415 L1042.5,431.9" stroke="#4a4a4a" stroke-width="1" fill="none"/>
<path d="M1042.5,435.9 L1042.5,448.1" stroke="#4a4a4a" stroke-width="1" fill="none"/>
<path d="M1037.0,431.9 H1048.0 M1037.0,435.9 H1048.0" stroke="#2a2a2a" stroke-width="1.35"/>
<path d="M1084.4,415 H1094.4 M1086.4,412.5 H1092.4 M1088.4,410 H1090.4" stroke="#999" stroke-width="0.7" fill="none"/>
<path d="M1089.4,415 L1089.4,431.9" stroke="#4a4a4a" stroke-width="1" fill="none"/>
<path d="M1089.4,435.9 L1089.4,448.1" stroke="#4a4a4a" stroke-width="1" fill="none"/>
<path d="M1083.9,431.9 H1094.9 M1083.9,435.9 H1094.9" stroke="#2a2a2a" stroke-width="1.35"/>
<path d="M1042.5,460.6 L1042.5,470.6" stroke="#4a4a4a" stroke-width="1" fill="none"/>
<path d="M1042.5,474.6 L1042.5,490.6" stroke="#4a4a4a" stroke-width="1" fill="none"/>
<path d="M1037.0,470.6 H1048.0 M1037.0,474.6 H1048.0" stroke="#2a2a2a" stroke-width="1.35"/>
<path d="M1037.5,491 H1047.5 M1039.5,493.5 H1045.5 M1041.5,496 H1043.5" stroke="#999" stroke-width="0.7" fill="none"/>
<path d="M1089.4,460.6 L1089.4,472.5" stroke="#4a4a4a" stroke-width="1" fill="none"/>
<path d="M1089.4,476.5 L1089.4,492" stroke="#4a4a4a" stroke-width="1" fill="none"/>
<path d="M1083.9,472.5 H1094.9 M1083.9,476.5 H1094.9" stroke="#2a2a2a" stroke-width="1.35"/>
<path d="M1084.4,493 H1094.4 M1086.4,495.5 H1092.4 M1088.4,498 H1090.4" stroke="#999" stroke-width="0.7" fill="none"/>
<path d="M1055,448.1 L1057,448.1" stroke="#4a4a4a" stroke-width="1" fill="none"/>
<path d="M1069.4,448.1 L1072,448.1" stroke="#4a4a4a" stroke-width="1" fill="none"/>
<path d="M1057,448.1 a1.5500000000000114,1.5500000000000114 0 0 1 3.1000000000000227,0 a1.5500000000000114,1.5500000000000114 0 0 1 3.1000000000000227,0 a1.5500000000000114,1.5500000000000114 0 0 1 3.1000000000000227,0 a1.5500000000000114,1.5500000000000114 0 0 1 3.1000000000000227,0" stroke="#4a4a4a" stroke-width="0.9" fill="none"/>
<path d="M1055,460.6 L1057,460.6" stroke="#4a4a4a" stroke-width="1" fill="none"/>
<path d="M1069.4,460.6 L1072,460.6" stroke="#4a4a4a" stroke-width="1" fill="none"/>
<path d="M1057,460.6 a1.5500000000000114,1.5500000000000114 0 0 1 3.1000000000000227,0 a1.5500000000000114,1.5500000000000114 0 0 1 3.1000000000000227,0 a1.5500000000000114,1.5500000000000114 0 0 1 3.1000000000000227,0 a1.5500000000000114,1.5500000000000114 0 0 1 3.1000000000000227,0" stroke="#4a4a4a" stroke-width="0.9" fill="none"/>
<text x="1045" y="430" font-size="3.6" fill="#4a4a4a" text-anchor="start" font-weight="normal" font-family="Liberation Sans" xml:space="preserve">CT112</text>
<text x="1046" y="436" font-size="3.6" fill="#4a4a4a" text-anchor="start" font-weight="normal" font-family="Liberation Sans" xml:space="preserve">NC</text>
<text x="1077" y="430" font-size="3.6" fill="#4a4a4a" text-anchor="start" font-weight="normal" font-family="Liberation Sans" xml:space="preserve">C3111</text>
<text x="1080" y="436" font-size="3.6" fill="#4a4a4a" text-anchor="start" font-weight="normal" font-family="Liberation Sans" xml:space="preserve">NC</text>
<text x="1045" y="469" font-size="3.6" fill="#4a4a4a" text-anchor="start" font-weight="normal" font-family="Liberation Sans" xml:space="preserve">CT124</text>
<text x="1046" y="474" font-size="3.6" fill="#4a4a4a" text-anchor="start" font-weight="normal" font-family="Liberation Sans" xml:space="preserve">NC</text>
<text x="1078" y="468" font-size="3.6" fill="#4a4a4a" text-anchor="start" font-weight="normal" font-family="Liberation Sans" xml:space="preserve">C3114</text>
<text x="1080" y="474" font-size="3.6" fill="#4a4a4a" text-anchor="start" font-weight="normal" font-family="Liberation Sans" xml:space="preserve">3.3pF</text>
<text x="1045" y="446.5" font-size="3.4" fill="#4a4a4a" text-anchor="start" font-weight="normal" font-family="Liberation Sans" xml:space="preserve">L3111</text>
<text x="1070" y="446.5" font-size="3.4" fill="#4a4a4a" text-anchor="start" font-weight="normal" font-family="Liberation Sans" xml:space="preserve">2.8nH</text>
<text x="1045" y="459" font-size="3.4" fill="#4a4a4a" text-anchor="start" font-weight="normal" font-family="Liberation Sans" xml:space="preserve">L3113</text>
<text x="1070" y="459" font-size="3.4" fill="#4a4a4a" text-anchor="start" font-weight="normal" font-family="Liberation Sans" xml:space="preserve">2.8nH</text>
<rect x="1146.3" y="444.4" width="16.200000000000045" height="20.0" stroke="#4a4a4a" stroke-width="0.9" fill="none"/>
<path d="M1143,452.3 L1146.3,452.3" stroke="#4a4a4a" stroke-width="1" fill="none"/>
<path d="M1133.8,456.3 L1146.3,456.3" stroke="#4a4a4a" stroke-width="1" fill="none"/>
<circle cx="1133.8" cy="456.3" r="1.3" fill="#333"/>
<path d="M1133.8,456.3 L1133.8,474.6 L1150.6,474.6" stroke="#4a4a4a" stroke-width="1" fill="none"/>
<circle cx="1150.6" cy="474.6" r="1.3" fill="#333"/>
<path d="M1150.6,464.4 L1150.6,486" stroke="#4a4a4a" stroke-width="1" fill="none"/>
<path d="M1145.6,486.5 H1155.6 M1147.6,489.0 H1153.6 M1149.6,491.5 H1151.6" stroke="#999" stroke-width="0.7" fill="none"/>
<path d="M1158.8,464.4 L1158.8,486" stroke="#4a4a4a" stroke-width="1" fill="none"/>
<path d="M1153.8,486.5 H1163.8 M1155.8,489.0 H1161.8 M1157.8,491.5 H1159.8" stroke="#999" stroke-width="0.7" fill="none"/>
<text x="1147" y="442" font-size="3.6" fill="#4a4a4a" text-anchor="start" font-weight="normal" font-family="Liberation Sans" xml:space="preserve">B7125</text>
<text x="1135" y="443.5" font-size="3.2" fill="#4a4a4a" text-anchor="start" font-weight="normal" font-family="Liberation Sans" xml:space="preserve">B3005</text>
<text x="1148" y="443" font-size="3.0" fill="#4a4a4a" text-anchor="start" font-weight="normal" font-family="Liberation Sans" xml:space="preserve">2.40-43GCFLP</text>
<text x="1148" y="449.40000000000003" font-size="3.4" fill="#4a4a4a" text-anchor="start" font-weight="normal" font-family="Liberation Sans" xml:space="preserve">TX</text>
<text x="1148" y="453.5" font-size="3.4" fill="#4a4a4a" text-anchor="start" font-weight="normal" font-family="Liberation Sans" xml:space="preserve"></text>
<text x="1148" y="457.8" font-size="3.4" fill="#4a4a4a" text-anchor="start" font-weight="normal" font-family="Liberation Sans" xml:space="preserve"></text>
<text x="1148" y="461.90000000000003" font-size="3.4" fill="#4a4a4a" text-anchor="start" font-weight="normal" font-family="Liberation Sans" xml:space="preserve">TX</text>
<text x="1157" y="449.40000000000003" font-size="3.4" fill="#4a4a4a" text-anchor="start" font-weight="normal" font-family="Liberation Sans" xml:space="preserve">RX</text>
<text x="1157" y="453.5" font-size="3.4" fill="#4a4a4a" text-anchor="start" font-weight="normal" font-family="Liberation Sans" xml:space="preserve">RX</text>
<text x="1157" y="457.8" font-size="3.4" fill="#4a4a4a" text-anchor="start" font-weight="normal" font-family="Liberation Sans" xml:space="preserve">RX</text>
<text x="1157" y="461.90000000000003" font-size="3.4" fill="#4a4a4a" text-anchor="start" font-weight="normal" font-family="Liberation Sans" xml:space="preserve">RX</text>
<path d="M1162.5,448.1 L1205,448.1 L1205,423.3 L1233.4,423.3" stroke="#4a4a4a" stroke-width="1" fill="none"/>
<path d="M1270.5,423.3 L1285,423.3" stroke="#4a4a4a" stroke-width="1" fill="none"/>
<path d="M1162.5,452.2 L1233.4,452.2" stroke="#4a4a4a" stroke-width="1" fill="none"/>
<path d="M1270.5,452.2 L1285,452.2" stroke="#4a4a4a" stroke-width="1" fill="none"/>
<path d="M1162.5,456.7 L1207.6,456.7 L1207.6,460.5 L1233.4,460.5" stroke="#4a4a4a" stroke-width="1" fill="none"/>
<path d="M1270.5,460.5 L1285,460.5" stroke="#4a4a4a" stroke-width="1" fill="none"/>
<path d="M1162.5,460.5 L1205,460.5 L1205,488.3 L1233.4,488.3" stroke="#4a4a4a" stroke-width="1" fill="none"/>
<path d="M1270.5,488.3 L1285,488.3" stroke="#4a4a4a" stroke-width="1" fill="none"/>
<circle cx="1233.4" cy="423.3" r="1.4" fill="#333"/>
<circle cx="1233.4" cy="452.2" r="1.4" fill="#333"/>
<circle cx="1233.4" cy="460.5" r="1.4" fill="#333"/>
<circle cx="1233.4" cy="488.3" r="1.4" fill="#333"/>
<circle cx="1270.5" cy="423.3" r="1.4" fill="#333"/>
<circle cx="1270.5" cy="452.2" r="1.4" fill="#333"/>
<circle cx="1270.5" cy="460.5" r="1.4" fill="#333"/>
<circle cx="1270.5" cy="488.3" r="1.4" fill="#333"/>
<path d="M1233.4,423.3 L1233.4,429" stroke="#4a4a4a" stroke-width="1" fill="none"/>
<path d="M1233.4,443 L1233.4,452.2" stroke="#4a4a4a" stroke-width="1" fill="none"/>
<path d="M1233.4,429 a2.3333333333333335,2.3333333333333335 0 0 1 0,4.666666666666667 a2.3333333333333335,2.3333333333333335 0 0 1 0,4.666666666666667 a2.3333333333333335,2.3333333333333335 0 0 1 0,4.666666666666667" stroke="#4a4a4a" stroke-width="0.9" fill="none"/>
<path d="M1270.5,423.3 L1270.5,429" stroke="#4a4a4a" stroke-width="1" fill="none"/>
<path d="M1270.5,443 L1270.5,452.2" stroke="#4a4a4a" stroke-width="1" fill="none"/>
<path d="M1270.5,429 a2.3333333333333335,2.3333333333333335 0 0 1 0,4.666666666666667 a2.3333333333333335,2.3333333333333335 0 0 1 0,4.666666666666667 a2.3333333333333335,2.3333333333333335 0 0 1 0,4.666666666666667" stroke="#4a4a4a" stroke-width="0.9" fill="none"/>
<path d="M1233.4,460.5 L1233.4,467" stroke="#4a4a4a" stroke-width="1" fill="none"/>
<path d="M1233.4,481 L1233.4,488.3" stroke="#4a4a4a" stroke-width="1" fill="none"/>
<path d="M1233.4,467 a2.3333333333333335,2.3333333333333335 0 0 1 0,4.666666666666667 a2.3333333333333335,2.3333333333333335 0 0 1 0,4.666666666666667 a2.3333333333333335,2.3333333333333335 0 0 1 0,4.666666666666667" stroke="#4a4a4a" stroke-width="0.9" fill="none"/>
<path d="M1270.5,460.5 L1270.5,467" stroke="#4a4a4a" stroke-width="1" fill="none"/>
<path d="M1270.5,481 L1270.5,488.3" stroke="#4a4a4a" stroke-width="1" fill="none"/>
<path d="M1270.5,467 a2.3333333333333335,2.3333333333333335 0 0 1 0,4.666666666666667 a2.3333333333333335,2.3333333333333335 0 0 1 0,4.666666666666667 a2.3333333333333335,2.3333333333333335 0 0 1 0,4.666666666666667" stroke="#4a4a4a" stroke-width="0.9" fill="none"/>
<path d="M1233.4,423.3 L1247,423.3" stroke="#4a4a4a" stroke-width="1" fill="none"/>
<path d="M1258,423.3 L1270.5,423.3" stroke="#4a4a4a" stroke-width="1" fill="none"/>
<path d="M1247,423.3 a1.375,1.375 0 0 1 2.75,0 a1.375,1.375 0 0 1 2.75,0 a1.375,1.375 0 0 1 2.75,0 a1.375,1.375 0 0 1 2.75,0" stroke="#4a4a4a" stroke-width="0.9" fill="none"/>
<path d="M1233.4,452.2 L1247,452.2" stroke="#4a4a4a" stroke-width="1" fill="none"/>
<path d="M1258,452.2 L1270.5,452.2" stroke="#4a4a4a" stroke-width="1" fill="none"/>
<path d="M1247,452.2 a1.375,1.375 0 0 1 2.75,0 a1.375,1.375 0 0 1 2.75,0 a1.375,1.375 0 0 1 2.75,0 a1.375,1.375 0 0 1 2.75,0" stroke="#4a4a4a" stroke-width="0.9" fill="none"/>
<path d="M1233.4,460.5 L1246,460.5" stroke="#4a4a4a" stroke-width="1" fill="none"/>
<path d="M1259,460.5 L1270.5,460.5" stroke="#4a4a4a" stroke-width="1" fill="none"/>
<path d="M1246,460.5 L1247.0833333333333,458.0 L1249.25,463.0 L1251.4166666666667,458.0 L1253.5833333333333,463.0 L1255.75,458.0 L1257.9166666666667,463.0 L1259,460.5" stroke="#4a4a4a" stroke-width="0.9" fill="none"/>
<path d="M1233.4,488.3 L1248,488.3" stroke="#4a4a4a" stroke-width="1" fill="none"/>
<path d="M1261,488.3 L1270.5,488.3" stroke="#4a4a4a" stroke-width="1" fill="none"/>
<path d="M1248,488.3 L1249.0833333333333,485.8 L1251.25,490.8 L1253.4166666666667,485.8 L1255.5833333333333,490.8 L1257.75,485.8 L1259.9166666666667,490.8 L1261,488.3" stroke="#4a4a4a" stroke-width="0.9" fill="none"/>
<path d="M1285,423.3 L1287,420.8 H1293 V425.8 H1287Z" stroke="#777" stroke-width="0.8" fill="none"/>
<text x="1295" y="424.8" font-size="3.6" fill="#4a4a4a" text-anchor="start" font-weight="normal" font-family="Liberation Sans" xml:space="preserve">LB_RXN   [2]</text>
<path d="M1285,452.2 L1287,449.7 H1293 V454.7 H1287Z" stroke="#777" stroke-width="0.8" fill="none"/>
<text x="1295" y="453.7" font-size="3.6" fill="#4a4a4a" text-anchor="start" font-weight="normal" font-family="Liberation Sans" xml:space="preserve">LB_RXP   [2]</text>
<path d="M1285,460.5 L1287,458.0 H1293 V463.0 H1287Z" stroke="#777" stroke-width="0.8" fill="none"/>
<text x="1295" y="462.0" font-size="3.6" fill="#4a4a4a" text-anchor="start" font-weight="normal" font-family="Liberation Sans" xml:space="preserve">HB_RXN   [2]</text>
<path d="M1285,488.3 L1287,485.8 H1293 V490.8 H1287Z" stroke="#777" stroke-width="0.8" fill="none"/>
<text x="1295" y="489.8" font-size="3.6" fill="#4a4a4a" text-anchor="start" font-weight="normal" font-family="Liberation Sans" xml:space="preserve">HB_RXP   [2]</text>
<text x="1235" y="421.5" font-size="3.4" fill="#4a4a4a" text-anchor="start" font-weight="normal" font-family="Liberation Sans" xml:space="preserve">L3102</text>
<text x="1258" y="421.5" font-size="3.4" fill="#4a4a4a" text-anchor="start" font-weight="normal" font-family="Liberation Sans" xml:space="preserve">4.3nH</text>
<text x="1223" y="432" font-size="3.4" fill="#4a4a4a" text-anchor="start" font-weight="normal" font-family="Liberation Sans" xml:space="preserve">L3106</text>
<text x="1227" y="441" font-size="3.4" fill="#4a4a4a" text-anchor="start" font-weight="normal" font-family="Liberation Sans" xml:space="preserve">NC</text>
<text x="1259" y="432" font-size="3.4" fill="#4a4a4a" text-anchor="start" font-weight="normal" font-family="Liberation Sans" xml:space="preserve">L3107</text>
<text x="1260" y="441" font-size="3.4" fill="#4a4a4a" text-anchor="start" font-weight="normal" font-family="Liberation Sans" xml:space="preserve">33nH</text>
<text x="1235" y="450.5" font-size="3.4" fill="#4a4a4a" text-anchor="start" font-weight="normal" font-family="Liberation Sans" xml:space="preserve">L3103</text>
<text x="1258" y="450.5" font-size="3.4" fill="#4a4a4a" text-anchor="start" font-weight="normal" font-family="Liberation Sans" xml:space="preserve">4.3nH</text>
<text x="1235" y="458.5" font-size="3.4" fill="#4a4a4a" text-anchor="start" font-weight="normal" font-family="Liberation Sans" xml:space="preserve">L3104</text>
<text x="1262" y="458.5" font-size="3.4" fill="#4a4a4a" text-anchor="start" font-weight="normal" font-family="Liberation Sans" xml:space="preserve">0R</text>
<text x="1222" y="470" font-size="3.4" fill="#4a4a4a" text-anchor="start" font-weight="normal" font-family="Liberation Sans" xml:space="preserve">L3108</text>
<text x="1226" y="477" font-size="3.4" fill="#4a4a4a" text-anchor="start" font-weight="normal" font-family="Liberation Sans" xml:space="preserve">NC</text>
<text x="1258" y="470" font-size="3.4" fill="#4a4a4a" text-anchor="start" font-weight="normal" font-family="Liberation Sans" xml:space="preserve">L3109</text>
<text x="1258" y="476" font-size="3.4" fill="#4a4a4a" text-anchor="start" font-weight="normal" font-family="Liberation Sans" xml:space="preserve">4.7nH</text>
<text x="1236" y="486.5" font-size="3.4" fill="#4a4a4a" text-anchor="start" font-weight="normal" font-family="Liberation Sans" xml:space="preserve">L3110</text>
<text x="1264" y="486.5" font-size="3.4" fill="#4a4a4a" text-anchor="start" font-weight="normal" font-family="Liberation Sans" xml:space="preserve">0R</text>
<text x="973" y="529" font-size="3.6" fill="#4a4a4a" text-anchor="start" font-weight="normal" font-family="Liberation Sans" xml:space="preserve">TXB1</text>
<circle cx="1025.5" cy="533.1" r="1.6" fill="#333"/>
<circle cx="1058.3" cy="533.1" r="1.6" fill="#333"/>
<path d="M1025.5,533.1 L1035,533.1" stroke="#4a4a4a" stroke-width="1" fill="none"/>
<path d="M1048,533.1 L1058.3,533.1" stroke="#4a4a4a" stroke-width="1" fill="none"/>
<path d="M1035,533.1 a1.625,1.625 0 0 1 3.25,0 a1.625,1.625 0 0 1 3.25,0 a1.625,1.625 0 0 1 3.25,0 a1.625,1.625 0 0 1 3.25,0" stroke="#4a4a4a" stroke-width="0.9" fill="none"/>
<path d="M1058.3,533.1 L1085.1,533.1 L1085.1,562.4 L1127.4,562.4" stroke="#4a4a4a" stroke-width="1" fill="none"/>
<path d="M1025.5,533.1 L1025.5,545.5" stroke="#4a4a4a" stroke-width="1" fill="none"/>
<path d="M1025.5,549.9 L1025.5,564" stroke="#4a4a4a" stroke-width="1" fill="none"/>
<path d="M1020.0,545.5 H1031.0 M1020.0,549.9 H1031.0" stroke="#2a2a2a" stroke-width="1.35"/>
<path d="M1020.5,564.5 H1030.5 M1022.5,567.0 H1028.5 M1024.5,569.5 H1026.5" stroke="#999" stroke-width="0.7" fill="none"/>
<path d="M1058.3,533.1 L1058.3,540" stroke="#4a4a4a" stroke-width="1" fill="none"/>
<path d="M1058.3,556 L1058.3,564" stroke="#4a4a4a" stroke-width="1" fill="none"/>
<path d="M1058.3,540 a2.0,2.0 0 0 1 0,4.0 a2.0,2.0 0 0 1 0,4.0 a2.0,2.0 0 0 1 0,4.0 a2.0,2.0 0 0 1 0,4.0" stroke="#4a4a4a" stroke-width="0.9" fill="none"/>
<path d="M1053.3,564.5 H1063.3 M1055.3,567.0 H1061.3 M1057.3,569.5 H1059.3" stroke="#999" stroke-width="0.7" fill="none"/>
<path d="M992.3,574.2 L994.3,571.7 H1000.3 V576.7 H994.3Z" stroke="#777" stroke-width="0.8" fill="none"/>
<text x="953" y="576" font-size="3.6" fill="#4a4a4a" text-anchor="start" font-weight="normal" font-family="Liberation Sans" xml:space="preserve">[2]   W_PA_OUT_B1</text>
<path d="M1000.3,574.2 L1025.5,574.2" stroke="#4a4a4a" stroke-width="1" fill="none"/>
<path d="M1056.7,574.2 L1127.4,574.2" stroke="#4a4a4a" stroke-width="1" fill="none"/>
<circle cx="1025.5" cy="574.2" r="1.6" fill="#333"/>
<circle cx="1056.7" cy="574.2" r="1.6" fill="#333"/>
<path d="M1025.5,574.2 L1034,574.2" stroke="#4a4a4a" stroke-width="1" fill="none"/>
<path d="M1049,574.2 L1056.7,574.2" stroke="#4a4a4a" stroke-width="1" fill="none"/>
<path d="M1034,574.2 L1035.25,571.7 L1037.75,576.7 L1040.25,571.7 L1042.75,576.7 L1045.25,571.7 L1047.75,576.7 L1049,574.2" stroke="#4a4a4a" stroke-width="0.9" fill="none"/>
<path d="M1025.5,574.2 L1025.5,580" stroke="#4a4a4a" stroke-width="1" fill="none"/>
<path d="M1025.5,598 L1025.5,604" stroke="#4a4a4a" stroke-width="1" fill="none"/>
<path d="M1025.5,580 a2.25,2.25 0 0 1 0,4.5 a2.25,2.25 0 0 1 0,4.5 a2.25,2.25 0 0 1 0,4.5 a2.25,2.25 0 0 1 0,4.5" stroke="#4a4a4a" stroke-width="0.9" fill="none"/>
<path d="M1020.5,604.5 H1030.5 M1022.5,607.0 H1028.5 M1024.5,609.5 H1026.5" stroke="#999" stroke-width="0.7" fill="none"/>
<path d="M1056.7,574.2 L1056.7,585.7" stroke="#4a4a4a" stroke-width="1" fill="none"/>
<path d="M1056.7,589.2 L1056.7,604" stroke="#4a4a4a" stroke-width="1" fill="none"/>
<path d="M1051.2,585.7 H1062.2 M1051.2,589.2 H1062.2" stroke="#2a2a2a" stroke-width="1.35"/>
<path d="M1051.7,604.5 H1061.7 M1053.7,607.0 H1059.7 M1055.7,609.5 H1057.7" stroke="#999" stroke-width="0.7" fill="none"/>
<text x="1023" y="532" font-size="3.4" fill="#4a4a4a" text-anchor="start" font-weight="normal" font-family="Liberation Sans" xml:space="preserve">C3249</text>
<text x="1046" y="532" font-size="3.4" fill="#4a4a4a" text-anchor="start" font-weight="normal" font-family="Liberation Sans" xml:space="preserve">L1nH</text>
<text x="1016" y="545" font-size="3.4" fill="#4a4a4a" text-anchor="start" font-weight="normal" font-family="Liberation Sans" xml:space="preserve">C3250</text>
<text x="1016" y="551" font-size="3.4" fill="#4a4a4a" text-anchor="start" font-weight="normal" font-family="Liberation Sans" xml:space="preserve">0.5pF</text>
<text x="1061" y="547" font-size="3.4" fill="#4a4a4a" text-anchor="start" font-weight="normal" font-family="Liberation Sans" xml:space="preserve">L3243</text>
<text x="1061" y="552" font-size="3.4" fill="#4a4a4a" text-anchor="start" font-weight="normal" font-family="Liberation Sans" xml:space="preserve">1.3nH</text>
<text x="1023" y="572.5" font-size="3.4" fill="#4a4a4a" text-anchor="start" font-weight="normal" font-family="Liberation Sans" xml:space="preserve">L3237</text>
<text x="1050" y="572.5" font-size="3.4" fill="#4a4a4a" text-anchor="start" font-weight="normal" font-family="Liberation Sans" xml:space="preserve">0R</text>
<text x="1029" y="583" font-size="3.4" fill="#4a4a4a" text-anchor="start" font-weight="normal" font-family="Liberation Sans" xml:space="preserve">C3243</text>
<text x="1032" y="589" font-size="3.4" fill="#4a4a4a" text-anchor="start" font-weight="normal" font-family="Liberation Sans" xml:space="preserve">NF</text>
<text x="1061" y="583" font-size="3.4" fill="#4a4a4a" text-anchor="start" font-weight="normal" font-family="Liberation Sans" xml:space="preserve">C3245</text>
<text x="1061" y="588" font-size="3.4" fill="#4a4a4a" text-anchor="start" font-weight="normal" font-family="Liberation Sans" xml:space="preserve">1.5pF</text>
<rect x="1127.4" y="549.6" width="25.5" height="36.60000000000002" stroke="#4a4a4a" stroke-width="0.9" fill="none"/>
<text x="1146" y="550.5" font-size="12.5" fill="#111" text-anchor="start" font-weight="normal" font-family="Liberation Sans" xml:space="preserve" textLength="12.5" lengthAdjust="spacingAndGlyphs">B1</text>
<text x="1129" y="548" font-size="3.4" fill="#4a4a4a" text-anchor="start" font-weight="normal" font-family="Liberation Sans" xml:space="preserve">U3004</text>
<text x="1151" y="555.0" font-size="3.4" fill="#4a4a4a" text-anchor="end" font-weight="normal" font-family="Liberation Sans" xml:space="preserve">RX</text>
<text x="1151" y="558.8" font-size="3.4" fill="#4a4a4a" text-anchor="end" font-weight="normal" font-family="Liberation Sans" xml:space="preserve">RX/GND</text>
<text x="1151" y="567.3" font-size="3.4" fill="#4a4a4a" text-anchor="end" font-weight="normal" font-family="Liberation Sans" xml:space="preserve">GND</text>
<text x="1151" y="571.4" font-size="3.4" fill="#4a4a4a" text-anchor="end" font-weight="normal" font-family="Liberation Sans" xml:space="preserve">GND</text>
<text x="1151" y="575.5" font-size="3.4" fill="#4a4a4a" text-anchor="end" font-weight="normal" font-family="Liberation Sans" xml:space="preserve">GND</text>
<text x="1151" y="579.5999999999999" font-size="3.4" fill="#4a4a4a" text-anchor="end" font-weight="normal" font-family="Liberation Sans" xml:space="preserve">GND</text>
<text x="1129" y="563.5" font-size="3.6" fill="#4a4a4a" text-anchor="start" font-weight="normal" font-family="Liberation Sans" xml:space="preserve">ANT</text>
<text x="1129" y="576" font-size="3.6" fill="#4a4a4a" text-anchor="start" font-weight="normal" font-family="Liberation Sans" xml:space="preserve">TX</text>
<text x="1110" y="591" font-size="3.4" fill="#4a4a4a" text-anchor="start" font-weight="normal" font-family="Liberation Sans" xml:space="preserve">CHIP-BAFEY1G95KAMPBAR0S #O.B</text>
<path d="M1152.9,566 L1178.7,566" stroke="#4a4a4a" stroke-width="1" fill="none"/>
<circle cx="1178.7" cy="566" r="1.3" fill="#333"/>
<path d="M1152.9,570.1 L1178.7,570.1" stroke="#4a4a4a" stroke-width="1" fill="none"/>
<circle cx="1178.7" cy="570.1" r="1.3" fill="#333"/>
<path d="M1152.9,574.2 L1178.7,574.2" stroke="#4a4a4a" stroke-width="1" fill="none"/>
<circle cx="1178.7" cy="574.2" r="1.3" fill="#333"/>
<path d="M1152.9,578.3 L1178.7,578.3" stroke="#4a4a4a" stroke-width="1" fill="none"/>
<circle cx="1178.7" cy="578.3" r="1.3" fill="#333"/>
<path d="M1178.7,566 L1178.7,589" stroke="#4a4a4a" stroke-width="1" fill="none"/>
<path d="M1173.7,590 H1183.7 M1175.7,592.5 H1181.7 M1177.7,595 H1179.7" stroke="#999" stroke-width="0.7" fill="none"/>
<path d="M1152.9,553.5 L1199.4,553.5 L1199.4,539.4 L1245.5,539.4" stroke="#4a4a4a" stroke-width="1" fill="none"/>
<path d="M1249.5,539.4 L1282.3,539.4 L1282.3,566.3 L1294,566.3" stroke="#4a4a4a" stroke-width="1" fill="none"/>
<path d="M1152.9,558.1 L1199.4,558.1 L1199.4,596.2 L1248,596.2" stroke="#4a4a4a" stroke-width="1" fill="none"/>
<path d="M1252,596.2 L1282.3,596.2 L1282.3,570.1 L1294,570.1" stroke="#4a4a4a" stroke-width="1" fill="none"/>
<circle cx="1215.4" cy="539.4" r="1.4" fill="#333"/>
<circle cx="1215.4" cy="596.2" r="1.4" fill="#333"/>
<circle cx="1270.5" cy="539.4" r="1.4" fill="#333"/>
<circle cx="1270.5" cy="568.5" r="1.4" fill="#333"/>
<circle cx="1270.5" cy="596.2" r="1.4" fill="#333"/>
<path d="M1215.4,539.4 L1215.4,561" stroke="#4a4a4a" stroke-width="1" fill="none"/>
<path d="M1215.4,572 L1215.4,596.2" stroke="#4a4a4a" stroke-width="1" fill="none"/>
<path d="M1215.4,561 a1.8333333333333333,1.8333333333333333 0 0 1 0,3.6666666666666665 a1.8333333333333333,1.8333333333333333 0 0 1 0,3.6666666666666665 a1.8333333333333333,1.8333333333333333 0 0 1 0,3.6666666666666665" stroke="#4a4a4a" stroke-width="0.9" fill="none"/>
<path d="M1270.5,539.4 L1270.5,548" stroke="#4a4a4a" stroke-width="1" fill="none"/>
<path d="M1270.5,559 L1270.5,568.5" stroke="#4a4a4a" stroke-width="1" fill="none"/>
<path d="M1270.5,548 a1.8333333333333333,1.8333333333333333 0 0 1 0,3.6666666666666665 a1.8333333333333333,1.8333333333333333 0 0 1 0,3.6666666666666665 a1.8333333333333333,1.8333333333333333 0 0 1 0,3.6666666666666665" stroke="#4a4a4a" stroke-width="0.9" fill="none"/>
<path d="M1270.5,568.5 L1270.5,577" stroke="#4a4a4a" stroke-width="1" fill="none"/>
<path d="M1270.5,588 L1270.5,596.2" stroke="#4a4a4a" stroke-width="1" fill="none"/>
<path d="M1270.5,577 a1.8333333333333333,1.8333333333333333 0 0 1 0,3.6666666666666665 a1.8333333333333333,1.8333333333333333 0 0 1 0,3.6666666666666665 a1.8333333333333333,1.8333333333333333 0 0 1 0,3.6666666666666665" stroke="#4a4a4a" stroke-width="0.9" fill="none"/>
<path d="M1245.5,534.5 V544.5 M1249.5,534.5 V544.5 M1248,591 V601 M1252,591 V601 M1252,563.5 V573.5 M1256,563.5 V573.5" stroke="#222" stroke-width="1.3"/>
<path d="M1238,568.5 L1252,568.5" stroke="#4a4a4a" stroke-width="1" fill="none"/>
<path d="M1256,568.5 L1270.5,568.5" stroke="#4a4a4a" stroke-width="1" fill="none"/>
<path d="M1234,563.5 V573.5 M1236.5,565.5 V571.5 M1239,567.5 V569.5" stroke="#999" stroke-width="0.7" fill="none"/>
<path d="M1294,566.3 L1296,564.3 H1302 V568.3 H1296Z" stroke="#777" stroke-width="0.8" fill="none"/>
<path d="M1294,570.1 L1296,568.1 H1302 V572.1 H1296Z" stroke="#777" stroke-width="0.8" fill="none"/>
<text x="1304" y="567.5" font-size="3.6" fill="#4a4a4a" text-anchor="start" font-weight="normal" font-family="Liberation Sans" xml:space="preserve">3GB8_RXP    [2]</text>
<text x="1304" y="572.5" font-size="3.6" fill="#4a4a4a" text-anchor="start" font-weight="normal" font-family="Liberation Sans" xml:space="preserve">3GB8_RXN    [2]</text>
<text x="1236" y="538" font-size="3.4" fill="#4a4a4a" text-anchor="start" font-weight="normal" font-family="Liberation Sans" xml:space="preserve">C3248</text>
<text x="1253" y="538" font-size="3.4" fill="#4a4a4a" text-anchor="start" font-weight="normal" font-family="Liberation Sans" xml:space="preserve">1.2pF</text>
<text x="1219" y="563" font-size="3.4" fill="#4a4a4a" text-anchor="start" font-weight="normal" font-family="Liberation Sans" xml:space="preserve">L3262</text>
<text x="1219" y="569" font-size="3.4" fill="#4a4a4a" text-anchor="start" font-weight="normal" font-family="Liberation Sans" xml:space="preserve">1.8nH</text>
<text x="1259" y="553" font-size="3.4" fill="#4a4a4a" text-anchor="start" font-weight="normal" font-family="Liberation Sans" xml:space="preserve">L3239</text>
<text x="1258" y="561" font-size="3.4" fill="#4a4a4a" text-anchor="start" font-weight="normal" font-family="Liberation Sans" xml:space="preserve">2.7nH</text>
<text x="1259" y="578" font-size="3.4" fill="#4a4a4a" text-anchor="start" font-weight="normal" font-family="Liberation Sans" xml:space="preserve">L3243</text>
<text x="1258" y="586" font-size="3.4" fill="#4a4a4a" text-anchor="start" font-weight="normal" font-family="Liberation Sans" xml:space="preserve">2.7nH</text>
<text x="1239" y="567" font-size="3.4" fill="#4a4a4a" text-anchor="start" font-weight="normal" font-family="Liberation Sans" xml:space="preserve">C3246</text>
<text x="1257" y="567" font-size="3.4" fill="#4a4a4a" text-anchor="start" font-weight="normal" font-family="Liberation Sans" xml:space="preserve">1.8pF</text>
<text x="1238" y="595" font-size="3.4" fill="#4a4a4a" text-anchor="start" font-weight="normal" font-family="Liberation Sans" xml:space="preserve">C3247</text>
<text x="1255" y="595" font-size="3.4" fill="#4a4a4a" text-anchor="start" font-weight="normal" font-family="Liberation Sans" xml:space="preserve">1.5pF</text>
<text x="977" y="631" font-size="3.6" fill="#4a4a4a" text-anchor="start" font-weight="normal" font-family="Liberation Sans" xml:space="preserve">TXB8</text>
<circle cx="1023.8" cy="631.1" r="1.6" fill="#333"/>
<circle cx="1056.7" cy="631.1" r="1.6" fill="#333"/>
<path d="M1038.6,626 V636 M1042.7,626 V636" stroke="#222" stroke-width="1.4"/>
<path d="M1023.8,631.1 L1038.6,631.1" stroke="#4a4a4a" stroke-width="1" fill="none"/>
<path d="M1042.7,631.1 L1087.4,631.1 L1087.4,667.9 L1133.6,667.9" stroke="#4a4a4a" stroke-width="1" fill="none"/>
<path d="M1023.8,631.1 L1023.8,642" stroke="#4a4a4a" stroke-width="1" fill="none"/>
<path d="M1023.8,654 L1023.8,665" stroke="#4a4a4a" stroke-width="1" fill="none"/>
<path d="M1023.8,642 a2.0,2.0 0 0 1 0,4.0 a2.0,2.0 0 0 1 0,4.0 a2.0,2.0 0 0 1 0,4.0" stroke="#4a4a4a" stroke-width="0.9" fill="none"/>
<path d="M1018.8,666 H1028.8 M1020.8,668.5 H1026.8 M1022.8,671 H1024.8" stroke="#999" stroke-width="0.7" fill="none"/>
<path d="M1056.7,631.1 L1056.7,642" stroke="#4a4a4a" stroke-width="1" fill="none"/>
<path d="M1056.7,654 L1056.7,665" stroke="#4a4a4a" stroke-width="1" fill="none"/>
<path d="M1056.7,642 a2.0,2.0 0 0 1 0,4.0 a2.0,2.0 0 0 1 0,4.0 a2.0,2.0 0 0 1 0,4.0" stroke="#4a4a4a" stroke-width="0.9" fill="none"/>
<path d="M1051.7,666 H1061.7 M1053.7,668.5 H1059.7 M1055.7,671 H1057.7" stroke="#999" stroke-width="0.7" fill="none"/>
<path d="M998.5,680.4 L1000.5,677.9 H1006.5 V682.9 H1000.5Z" stroke="#777" stroke-width="0.8" fill="none"/>
<text x="960" y="682" font-size="3.6" fill="#4a4a4a" text-anchor="start" font-weight="normal" font-family="Liberation Sans" xml:space="preserve">[2]   W_PA_OUT_B8</text>
<path d="M1006.5,680.4 L1038.6,680.4" stroke="#4a4a4a" stroke-width="1" fill="none"/>
<path d="M1042.7,680.4 L1133.6,680.4" stroke="#4a4a4a" stroke-width="1" fill="none"/>
<path d="M1038.6,675 V685 M1042.7,675 V685" stroke="#222" stroke-width="1.4"/>
<circle cx="1023.8" cy="680.4" r="1.6" fill="#333"/>
<circle cx="1056.7" cy="680.4" r="1.6" fill="#333"/>
<path d="M1023.8,680.4 L1023.8,692.3" stroke="#4a4a4a" stroke-width="1" fill="none"/>
<path d="M1023.8,696.4 L1023.8,712" stroke="#4a4a4a" stroke-width="1" fill="none"/>
<path d="M1018.3,692.3 H1029.3 M1018.3,696.4 H1029.3" stroke="#2a2a2a" stroke-width="1.35"/>
<path d="M1018.8,713 H1028.8 M1020.8,715.5 H1026.8 M1022.8,718 H1024.8" stroke="#999" stroke-width="0.7" fill="none"/>
<path d="M1056.7,680.4 L1056.7,692.3" stroke="#4a4a4a" stroke-width="1" fill="none"/>
<path d="M1056.7,696.4 L1056.7,712" stroke="#4a4a4a" stroke-width="1" fill="none"/>
<path d="M1051.2,692.3 H1062.2 M1051.2,696.4 H1062.2" stroke="#2a2a2a" stroke-width="1.35"/>
<path d="M1051.7,713 H1061.7 M1053.7,715.5 H1059.7 M1055.7,718 H1057.7" stroke="#999" stroke-width="0.7" fill="none"/>
<text x="1025" y="629" font-size="3.4" fill="#4a4a4a" text-anchor="start" font-weight="normal" font-family="Liberation Sans" xml:space="preserve">C3268</text>
<text x="1050" y="629" font-size="3.4" fill="#4a4a4a" text-anchor="start" font-weight="normal" font-family="Liberation Sans" xml:space="preserve">NF</text>
<text x="1011" y="645" font-size="3.4" fill="#4a4a4a" text-anchor="start" font-weight="normal" font-family="Liberation Sans" xml:space="preserve">L3259</text>
<text x="1014" y="652" font-size="3.4" fill="#4a4a4a" text-anchor="start" font-weight="normal" font-family="Liberation Sans" xml:space="preserve">NF</text>
<text x="1043" y="645" font-size="3.4" fill="#4a4a4a" text-anchor="start" font-weight="normal" font-family="Liberation Sans" xml:space="preserve">L3260</text>
<text x="1046" y="652" font-size="3.4" fill="#4a4a4a" text-anchor="start" font-weight="normal" font-family="Liberation Sans" xml:space="preserve">NF</text>
<text x="1027" y="677.5" font-size="3.4" fill="#4a4a4a" text-anchor="start" font-weight="normal" font-family="Liberation Sans" xml:space="preserve">C3269</text>
<text x="1050" y="677.5" font-size="3.4" fill="#4a4a4a" text-anchor="start" font-weight="normal" font-family="Liberation Sans" xml:space="preserve">NF</text>
<text x="1015" y="690" font-size="3.4" fill="#4a4a4a" text-anchor="start" font-weight="normal" font-family="Liberation Sans" xml:space="preserve">C3300</text>
<text x="1017" y="700" font-size="3.4" fill="#4a4a4a" text-anchor="start" font-weight="normal" font-family="Liberation Sans" xml:space="preserve">NC</text>
<text x="1045" y="690" font-size="3.4" fill="#4a4a4a" text-anchor="start" font-weight="normal" font-family="Liberation Sans" xml:space="preserve">C3261</text>
<text x="1048" y="700" font-size="3.4" fill="#4a4a4a" text-anchor="start" font-weight="normal" font-family="Liberation Sans" xml:space="preserve">NC</text>
<rect x="1133.6" y="656.4" width="25.0" height="35.89999999999998" stroke="#4a4a4a" stroke-width="0.9" fill="none"/>
<text x="1148" y="655.5" font-size="12.5" fill="#111" text-anchor="start" font-weight="normal" font-family="Liberation Sans" xml:space="preserve" textLength="13" lengthAdjust="spacingAndGlyphs">B8</text>
<text x="1134" y="654.5" font-size="3.4" fill="#4a4a4a" text-anchor="start" font-weight="normal" font-family="Liberation Sans" xml:space="preserve">U3207</text>
<text x="1143" y="697" font-size="3.4" fill="#4a4a4a" text-anchor="start" font-weight="normal" font-family="Liberation Sans" xml:space="preserve">NF</text>
<text x="1135" y="669" font-size="3.6" fill="#4a4a4a" text-anchor="start" font-weight="normal" font-family="Liberation Sans" xml:space="preserve">ANT</text>
<text x="1135" y="682" font-size="3.6" fill="#4a4a4a" text-anchor="start" font-weight="normal" font-family="Liberation Sans" xml:space="preserve">TX</text>
<text x="1157" y="660.6999999999999" font-size="3.4" fill="#4a4a4a" text-anchor="end" font-weight="normal" font-family="Liberation Sans" xml:space="preserve">RX</text>
<text x="1157" y="664.8" font-size="3.4" fill="#4a4a4a" text-anchor="end" font-weight="normal" font-family="Liberation Sans" xml:space="preserve">RX/GND</text>
<text x="1157" y="673.5" font-size="3.4" fill="#4a4a4a" text-anchor="end" font-weight="normal" font-family="Liberation Sans" xml:space="preserve">GND</text>
<text x="1157" y="677.4" font-size="3.4" fill="#4a4a4a" text-anchor="end" font-weight="normal" font-family="Liberation Sans" xml:space="preserve">GND</text>
<text x="1157" y="681.5999999999999" font-size="3.4" fill="#4a4a4a" text-anchor="end" font-weight="normal" font-family="Liberation Sans" xml:space="preserve">GND</text>
<text x="1157" y="685.6999999999999" font-size="3.4" fill="#4a4a4a" text-anchor="end" font-weight="normal" font-family="Liberation Sans" xml:space="preserve">GND</text>
<path d="M1158.6,672.2 L1172.6,672.2" stroke="#4a4a4a" stroke-width="1" fill="none"/>
<circle cx="1172.6" cy="672.2" r="1.3" fill="#333"/>
<path d="M1158.6,676.1 L1172.6,676.1" stroke="#4a4a4a" stroke-width="1" fill="none"/>
<circle cx="1172.6" cy="676.1" r="1.3" fill="#333"/>
<path d="M1158.6,680.3 L1172.6,680.3" stroke="#4a4a4a" stroke-width="1" fill="none"/>
<circle cx="1172.6" cy="680.3" r="1.3" fill="#333"/>
<path d="M1158.6,684.4 L1172.6,684.4" stroke="#4a4a4a" stroke-width="1" fill="none"/>
<circle cx="1172.6" cy="684.4" r="1.3" fill="#333"/>
<path d="M1172.6,672.2 L1172.6,699" stroke="#4a4a4a" stroke-width="1" fill="none"/>
<path d="M1167.6,700 H1177.6 M1169.6,702.5 H1175.6 M1171.6,705 H1173.6" stroke="#999" stroke-width="0.7" fill="none"/>
<text x="1113" y="716" font-size="12.5" fill="#111" text-anchor="start" font-weight="normal" font-family="Liberation Sans" xml:space="preserve" textLength="96" lengthAdjust="spacingAndGlyphs">SAYFH897MHA0F00</text>
<path d="M1158.6,659.5 L1197.4,659.5 L1197.4,645.4 L1215.4,645.4" stroke="#4a4a4a" stroke-width="1" fill="none"/>
<path d="M1254.1,645.4 L1274.4,645.4 L1274.4,659.5 L1293.6,659.5" stroke="#4a4a4a" stroke-width="1" fill="none"/>
<path d="M1158.6,663.6 L1197.4,663.6 L1197.4,678.3 L1215.4,678.3" stroke="#4a4a4a" stroke-width="1" fill="none"/>
<path d="M1254.1,678.3 L1274.4,678.3 L1274.4,663.6 L1293.6,663.6" stroke="#4a4a4a" stroke-width="1" fill="none"/>
<circle cx="1215.4" cy="645.4" r="1.4" fill="#333"/>
<circle cx="1215.4" cy="678.3" r="1.4" fill="#333"/>
<path d="M1215.4,645.4 L1215.4,654" stroke="#4a4a4a" stroke-width="1" fill="none"/>
<path d="M1215.4,670 L1215.4,678.3" stroke="#4a4a4a" stroke-width="1" fill="none"/>
<path d="M1215.4,654 a2.0,2.0 0 0 1 0,4.0 a2.0,2.0 0 0 1 0,4.0 a2.0,2.0 0 0 1 0,4.0 a2.0,2.0 0 0 1 0,4.0" stroke="#4a4a4a" stroke-width="0.9" fill="none"/>
<circle cx="1254.1" cy="645.4" r="1.4" fill="#333"/>
<circle cx="1254.1" cy="678.3" r="1.4" fill="#333"/>
<path d="M1254.1,645.4 L1254.1,654" stroke="#4a4a4a" stroke-width="1" fill="none"/>
<path d="M1254.1,670 L1254.1,678.3" stroke="#4a4a4a" stroke-width="1" fill="none"/>
<path d="M1254.1,654 a2.0,2.0 0 0 1 0,4.0 a2.0,2.0 0 0 1 0,4.0 a2.0,2.0 0 0 1 0,4.0 a2.0,2.0 0 0 1 0,4.0" stroke="#4a4a4a" stroke-width="0.9" fill="none"/>
<path d="M1215.4,645.4 L1227,645.4" stroke="#4a4a4a" stroke-width="1" fill="none"/>
<path d="M1238,645.4 L1254.1,645.4" stroke="#4a4a4a" stroke-width="1" fill="none"/>
<path d="M1227,645.4 a1.8333333333333333,1.8333333333333333 0 0 1 3.6666666666666665,0 a1.8333333333333333,1.8333333333333333 0 0 1 3.6666666666666665,0 a1.8333333333333333,1.8333333333333333 0 0 1 3.6666666666666665,0" stroke="#4a4a4a" stroke-width="0.9" fill="none"/>
<path d="M1215.4,678.3 L1227,678.3" stroke="#4a4a4a" stroke-width="1" fill="none"/>
<path d="M1238,678.3 L1254.1,678.3" stroke="#4a4a4a" stroke-width="1" fill="none"/>
<path d="M1227,678.3 a1.8333333333333333,1.8333333333333333 0 0 1 3.6666666666666665,0 a1.8333333333333333,1.8333333333333333 0 0 1 3.6666666666666665,0 a1.8333333333333333,1.8333333333333333 0 0 1 3.6666666666666665,0" stroke="#4a4a4a" stroke-width="0.9" fill="none"/>
<path d="M1293.6,659.5 L1295.6,657.5 H1301.6 V661.5 H1295.6Z" stroke="#777" stroke-width="0.8" fill="none"/>
<path d="M1293.6,663.6 L1295.6,661.6 H1301.6 V665.6 H1295.6Z" stroke="#777" stroke-width="0.8" fill="none"/>
<text x="1304" y="660.5" font-size="3.6" fill="#4a4a4a" text-anchor="start" font-weight="normal" font-family="Liberation Sans" xml:space="preserve">3GB8_RXN    [2]</text>
<text x="1304" y="665" font-size="3.6" fill="#4a4a4a" text-anchor="start" font-weight="normal" font-family="Liberation Sans" xml:space="preserve">3GB8_RXP    [2]</text>
<text x="1216" y="643.5" font-size="3.4" fill="#4a4a4a" text-anchor="start" font-weight="normal" font-family="Liberation Sans" xml:space="preserve">L3256</text>
<text x="1242" y="643.5" font-size="3.4" fill="#4a4a4a" text-anchor="start" font-weight="normal" font-family="Liberation Sans" xml:space="preserve">NF</text>
<text x="1218" y="660" font-size="3.4" fill="#4a4a4a" text-anchor="start" font-weight="normal" font-family="Liberation Sans" xml:space="preserve">L3258</text>
<text x="1221" y="665" font-size="3.4" fill="#4a4a4a" text-anchor="start" font-weight="normal" font-family="Liberation Sans" xml:space="preserve">NF</text>
<text x="1256" y="660" font-size="3.4" fill="#4a4a4a" text-anchor="start" font-weight="normal" font-family="Liberation Sans" xml:space="preserve">L3257</text>
<text x="1256" y="665" font-size="3.4" fill="#4a4a4a" text-anchor="start" font-weight="normal" font-family="Liberation Sans" xml:space="preserve">NC</text>
<text x="1216" y="677" font-size="3.4" fill="#4a4a4a" text-anchor="start" font-weight="normal" font-family="Liberation Sans" xml:space="preserve">L3255</text>
<text x="1242" y="677" font-size="3.4" fill="#4a4a4a" text-anchor="start" font-weight="normal" font-family="Liberation Sans" xml:space="preserve">NF</text>
<path d="M1218.4,163.5 V211.5 M1218.4,171.5 H1360 M1218.4,179.6 H1360 M1218.4,187.5 H1360 M1218.4,195.4 H1360 M1218.4,203.5 H1360 M1218.4,211.5 H1360 M1243.5,171.5 V211.5 M1304.5,171.5 V211.5 M1340.5,171.5 V211.5" stroke="#444" stroke-width="0.8" fill="none"/>
<text x="1262" y="169" font-size="3.8" fill="#4a4a4a" text-anchor="start" font-weight="normal" font-family="Liberation Sans" xml:space="preserve">REVISION RECORD</text>
<text x="1227" y="177" font-size="3.6" fill="#4a4a4a" text-anchor="start" font-weight="normal" font-family="Liberation Sans" xml:space="preserve">ITB</text>
<text x="1266" y="177" font-size="3.6" fill="#4a4a4a" text-anchor="start" font-weight="normal" font-family="Liberation Sans" xml:space="preserve">ECO NO:</text>
<text x="1311" y="177" font-size="3.6" fill="#4a4a4a" text-anchor="start" font-weight="normal" font-family="Liberation Sans" xml:space="preserve">APPROVED:</text>
<text x="1344" y="177" font-size="3.6" fill="#4a4a4a" text-anchor="start" font-weight="normal" font-family="Liberation Sans" xml:space="preserve">DATE:</text>
<path d="M749.4,834 V773.4 H1360 M749.4,802.3 H1360 M749.4,818.5 H954.1 M954.1,773.4 V834 M1161.3,773.4 V834 M1249.7,802.3 V834 M797.9,802.3 V834 M863.7,802.3 V834 M903.4,802.3 V834" stroke="#555" stroke-width="0.9" fill="none"/>
<text x="753" y="779" font-size="3.2" fill="#555" text-anchor="start" font-weight="normal" font-family="Liberation Sans" xml:space="preserve">COMPANY:</text>
<text x="828" y="791.5" font-size="9" fill="#222" text-anchor="start" font-weight="normal" font-family="Liberation Sans" xml:space="preserve" textLength="45" lengthAdjust="spacingAndGlyphs">SZ-ITEL-RD</text>
<text x="753" y="814.5" font-size="9" fill="#222" text-anchor="start" font-weight="normal" font-family="Liberation Sans" xml:space="preserve" textLength="34" lengthAdjust="spacingAndGlyphs">DRAWN</text>
<text x="803" y="814.5" font-size="8.5" fill="#222" text-anchor="start" font-weight="normal" font-family="Liberation Sans" xml:space="preserve" textLength="16" lengthAdjust="spacingAndGlyphs">GDY</text>
<text x="868" y="814.5" font-size="9" fill="#222" text-anchor="start" font-weight="normal" font-family="Liberation Sans" xml:space="preserve" textLength="29" lengthAdjust="spacingAndGlyphs">DATED</text>
<text x="910" y="814.5" font-size="9" fill="#222" text-anchor="start" font-weight="normal" font-family="Liberation Sans" xml:space="preserve" textLength="17" lengthAdjust="spacingAndGlyphs">&lt;   &gt;</text>
<text x="754" y="830.5" font-size="9" fill="#222" text-anchor="start" font-weight="normal" font-family="Liberation Sans" xml:space="preserve" textLength="41" lengthAdjust="spacingAndGlyphs">CHECKED</text>
<text x="805" y="830.5" font-size="9" fill="#222" text-anchor="start" font-weight="normal" font-family="Liberation Sans" xml:space="preserve" textLength="17" lengthAdjust="spacingAndGlyphs">&lt;   &gt;</text>
<text x="868" y="830.5" font-size="9" fill="#222" text-anchor="start" font-weight="normal" font-family="Liberation Sans" xml:space="preserve" textLength="29" lengthAdjust="spacingAndGlyphs">DATED</text>
<text x="910" y="830.5" font-size="9" fill="#222" text-anchor="start" font-weight="normal" font-family="Liberation Sans" xml:space="preserve" textLength="17" lengthAdjust="spacingAndGlyphs">&lt;   &gt;</text>
<text x="960" y="791.5" font-size="9" fill="#222" text-anchor="start" font-weight="normal" font-family="Liberation Sans" xml:space="preserve" textLength="34" lengthAdjust="spacingAndGlyphs">MODEL:</text>
<text x="1048" y="791.5" font-size="12.5" fill="#222" text-anchor="start" font-weight="normal" font-family="Liberation Sans" xml:space="preserve" textLength="35" lengthAdjust="spacingAndGlyphs">F8009</text>
<text x="1168" y="791.5" font-size="9.5" fill="#222" text-anchor="start" font-weight="normal" font-family="Liberation Sans" xml:space="preserve" textLength="66" lengthAdjust="spacingAndGlyphs">Modified Date:</text>
<text x="1275" y="791.5" font-size="9.5" fill="#222" text-anchor="start" font-weight="normal" font-family="Liberation Sans" xml:space="preserve" textLength="51" lengthAdjust="spacingAndGlyphs">2017/11/30</text>
<text x="960" y="822.5" font-size="9.5" fill="#222" text-anchor="start" font-weight="normal" font-family="Liberation Sans" xml:space="preserve" textLength="29" lengthAdjust="spacingAndGlyphs">TITLE:</text>
<text x="997" y="822.5" font-size="9.5" fill="#222" text-anchor="start" font-weight="normal" font-family="Liberation Sans" xml:space="preserve" textLength="62" lengthAdjust="spacingAndGlyphs">1_RF_TXM_2G</text>
<text x="1168" y="822" font-size="9.5" fill="#222" text-anchor="start" font-weight="normal" font-family="Liberation Sans" xml:space="preserve" textLength="43" lengthAdjust="spacingAndGlyphs">VERSION:</text>
<text x="1221" y="821" font-size="9.5" fill="#222" text-anchor="start" font-weight="normal" font-family="Liberation Sans" xml:space="preserve" textLength="18" lengthAdjust="spacingAndGlyphs">V1.0</text>
<text x="1257" y="822" font-size="9.5" fill="#222" text-anchor="start" font-weight="normal" font-family="Liberation Sans" xml:space="preserve" textLength="31" lengthAdjust="spacingAndGlyphs">SHEET:</text>
<text x="1295" y="821" font-size="9.5" fill="#222" text-anchor="start" font-weight="normal" font-family="Liberation Sans" xml:space="preserve">1</text>
<text x="1313" y="822" font-size="9.5" fill="#222" text-anchor="start" font-weight="normal" font-family="Liberation Sans" xml:space="preserve" textLength="11" lengthAdjust="spacingAndGlyphs">OF</text>
<text x="1331" y="821" font-size="9.5" fill="#222" text-anchor="start" font-weight="normal" font-family="Liberation Sans" xml:space="preserve" textLength="11" lengthAdjust="spacingAndGlyphs">18</text></g></svg></div>
<div id="vsb" class="a">
<div class="a" style="left:0;top:0;width:14px;height:17px;border-bottom:1px solid #d0d0d0"><svg class="a" style="left:2px;top:6px" width="10" height="6"><path d="M0.5 5.5 L5 1 L9.5 5.5" fill="none" stroke="#505050" stroke-width="1.5"/></svg></div>
<div class="a" style="left:0;top:17px;width:14px;height:35px;background:#dadada;border-top:1px solid #c8c8c8"><div class="a" style="left:3px;top:15px;width:8px;height:2px;background:#606060"></div><div class="a" style="left:3px;top:18px;width:8px;height:2px;background:#606060"></div><div class="a" style="left:3px;top:21px;width:8px;height:2px;background:#606060"></div></div>
<div class="a" style="left:0;top:659px;width:14px;height:14px;border-top:1px solid #d0d0d0"><svg class="a" style="left:2px;top:6px" width="10" height="6"><path d="M0.5 0.5 L5 5 L9.5 0.5" fill="none" stroke="#505050" stroke-width="1.5"/></svg></div>
</div>
<div id="status" class="a">
<div class="a tl" style="left:0;top:6px;color:#000">Version:1.0.0.52</div>
<div class="a tl" style="left:1309px;top:6px;color:#f0f4f8">Current [F8009(S11X)_Main_SCH_V1.0]</div>
</div>
<div id="bottom" class="a"></div>
</body></html>
